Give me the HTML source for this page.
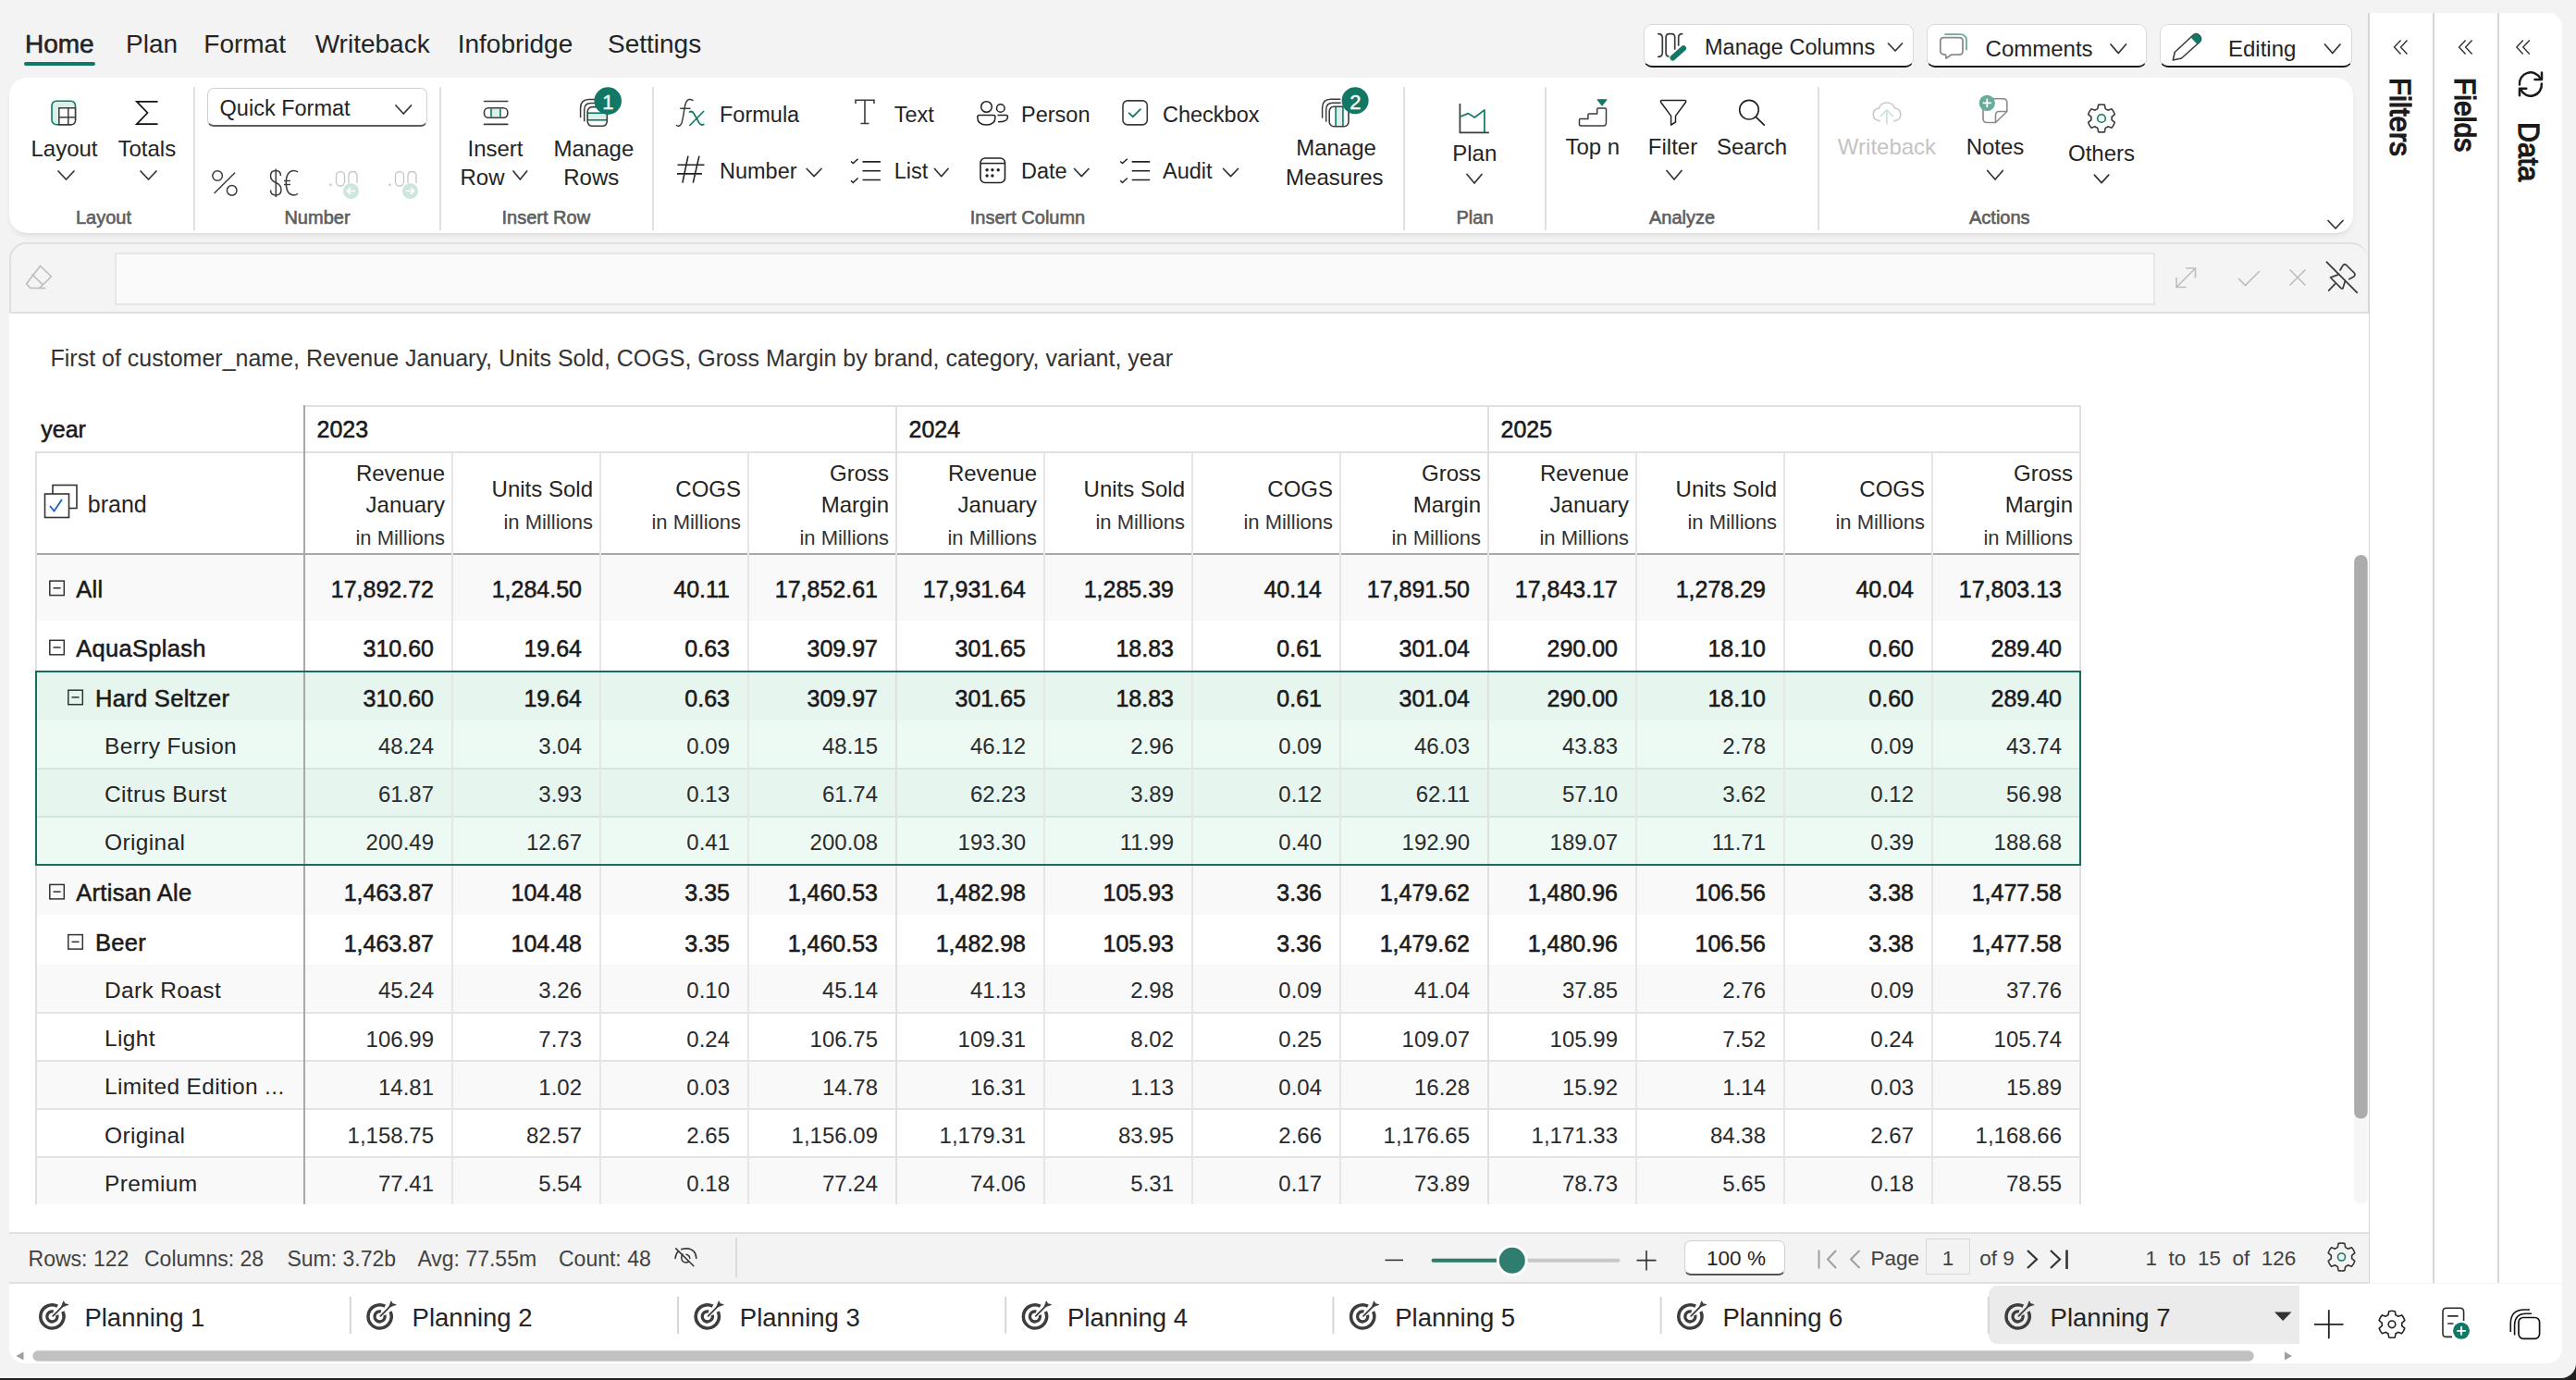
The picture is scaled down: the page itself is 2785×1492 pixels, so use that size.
<!DOCTYPE html><html><head><meta charset="utf-8"><style>
html,body{margin:0;padding:0;}
body{width:2785px;height:1492px;overflow:hidden;background:#202020;position:relative;font-family:"Liberation Sans", sans-serif;}
.t{position:absolute;white-space:nowrap;font-family:"Liberation Sans", sans-serif;}
#page{position:absolute;left:0;top:0;width:2785px;height:1490px;background:#f3f3f3;border-bottom-right-radius:16px;overflow:hidden;}
</style></head><body><div id="page">
<div class="t" style="left:27.0px;top:34.2px;font-size:28px;line-height:28px;font-weight:400;color:#242424;-webkit-text-stroke:0.6px #242424;">Home</div>
<div class="t" style="left:136.0px;top:34.2px;font-size:28px;line-height:28px;font-weight:400;color:#242424;">Plan</div>
<div class="t" style="left:220.3px;top:34.2px;font-size:28px;line-height:28px;font-weight:400;color:#242424;">Format</div>
<div class="t" style="left:340.7px;top:34.2px;font-size:28px;line-height:28px;font-weight:400;color:#242424;">Writeback</div>
<div class="t" style="left:494.7px;top:34.2px;font-size:28px;line-height:28px;font-weight:400;color:#242424;">Infobridge</div>
<div class="t" style="left:657.0px;top:34.2px;font-size:28px;line-height:28px;font-weight:400;color:#242424;">Settings</div>
<div style="position:absolute;left:26.0px;top:67.0px;width:77.0px;height:4.0px;background:#117865;border-radius:2px;"></div>
<div style="position:absolute;left:1777.0px;top:26.0px;width:292.0px;height:46.5px;background:#fff;border:1.5px solid #d9d9d9;border-bottom:2.5px solid #1a1a1a;border-radius:9px;box-sizing:border-box;"></div>
<div style="position:absolute;left:2083.0px;top:26.0px;width:237.6px;height:46.5px;background:#fff;border:1.5px solid #d9d9d9;border-bottom:2.5px solid #1a1a1a;border-radius:9px;box-sizing:border-box;"></div>
<div style="position:absolute;left:2335.0px;top:26.0px;width:207.6px;height:46.5px;background:#fff;border:1.5px solid #d9d9d9;border-bottom:2.5px solid #1a1a1a;border-radius:9px;box-sizing:border-box;"></div>
<div class="t" style="left:1843.0px;top:40.0px;font-size:23.5px;line-height:23.5px;font-weight:400;color:#242424;">Manage Columns</div>
<div class="t" style="left:2146.6px;top:41.2px;font-size:24px;line-height:24px;font-weight:400;color:#242424;">Comments</div>
<div class="t" style="left:2409.0px;top:41.2px;font-size:24px;line-height:24px;font-weight:400;color:#242424;">Editing</div>
<svg style="position:absolute;left:0;top:0" width="2785" height="1492" viewBox="0 0 2785 1492" fill="none"><polyline points="2041.5,47 2049.0,55 2056.5,47" stroke="#333" stroke-width="1.7" fill="none" stroke-linecap="round" stroke-linejoin="round"/><polyline points="2282,48 2290.25,57.5 2298.5,48" stroke="#333" stroke-width="1.7" fill="none" stroke-linecap="round" stroke-linejoin="round"/><polyline points="2513.5,48 2521.75,57.5 2530,48" stroke="#333" stroke-width="1.7" fill="none" stroke-linecap="round" stroke-linejoin="round"/><path d="M1792.8,36.6 Q1797.3,36.6 1797.3,41 L1797.3,57 Q1797.3,61.4 1792.8,61.4" stroke="#3b3b3b" stroke-width="1.7" fill="none" stroke-linecap="round"/><path d="M1803.8,60.9 Q1801.1,60.9 1801.1,57 L1801.1,40.5 Q1801.1,36.6 1804.5,36.6 L1807.5,36.6 Q1810.7,36.6 1810.7,40.5 L1810.7,53" stroke="#3b3b3b" stroke-width="1.7" fill="none" stroke-linecap="round"/><path d="M1818.7,36.6 Q1814.7,36.6 1814.7,40.5 L1814.7,49" stroke="#3b3b3b" stroke-width="1.7" fill="none" stroke-linecap="round"/><line x1="1808.5" y1="62.5" x2="1820" y2="52.3" stroke="#117865" stroke-width="6" stroke-linecap="round"/><path d="M2102.3,37.2 L2119,37.2 Q2126,37.2 2126,44 L2126,54.3" stroke="#6aab9c" stroke-width="1.8" fill="none"/><path d="M2101.8,40.6 L2118.2,40.6 Q2122,40.6 2122,44.5 L2122,55.3 Q2122,59.2 2118.2,59.2 L2109.6,59.2 L2104,63 L2103.5,59.2 Q2097.8,59.2 2097.8,55.3 L2097.8,44.5 Q2097.8,40.6 2101.8,40.6 Z" stroke="#8a8a8a" stroke-width="1.8" fill="#fff" stroke-linejoin="round"/><path d="M2349.3,65 L2351.2,56.5 L2371,38 Q2374.5,35 2378,38.5 Q2381,42 2378,45.5 L2358.5,63 Z" stroke="#3b3b3b" stroke-width="1.6" fill="#fff" stroke-linejoin="round"/><path d="M2368.5,40.5 L2371,38 Q2374.5,35 2378,38.5 Q2381,42 2378,45.5 L2375.5,47.8 Z" fill="#117865"/></svg>
<div style="position:absolute;left:10.0px;top:84.0px;width:2534.0px;height:168.0px;background:#fff;border-radius:19px;box-shadow:0 4px 7px -3px rgba(0,0,0,0.14);"></div>
<div style="position:absolute;left:209.0px;top:94.0px;width:2.0px;height:155.0px;background:#e0e0e0;"></div>
<div style="position:absolute;left:475.0px;top:94.0px;width:2.0px;height:155.0px;background:#e0e0e0;"></div>
<div style="position:absolute;left:704.7px;top:94.0px;width:2.0px;height:155.0px;background:#e0e0e0;"></div>
<div style="position:absolute;left:1516.5px;top:94.0px;width:2.0px;height:155.0px;background:#e0e0e0;"></div>
<div style="position:absolute;left:1670.0px;top:94.0px;width:2.0px;height:155.0px;background:#e0e0e0;"></div>
<div style="position:absolute;left:1964.7px;top:94.0px;width:2.0px;height:155.0px;background:#e0e0e0;"></div>
<div class="t" style="left:69.5px;transform:translateX(-50%);top:148.6px;font-size:24px;line-height:24px;font-weight:400;color:#242424;">Layout</div>
<div class="t" style="left:158.8px;transform:translateX(-50%);top:148.6px;font-size:24px;line-height:24px;font-weight:400;color:#242424;">Totals</div>
<div class="t" style="left:112.0px;transform:translateX(-50%);top:225.0px;font-size:20px;line-height:20px;font-weight:400;color:#616161;font-weight:400;-webkit-text-stroke:0.6px #5a5a5a;">Layout</div>
<div style="position:absolute;left:223.6px;top:94.5px;width:238.1px;height:42.8px;background:#fff;border:1.5px solid #d1d1d1;border-bottom:2px solid #5c5c5c;border-radius:7px;box-sizing:border-box;"></div>
<div class="t" style="left:237.6px;top:106.0px;font-size:23.5px;line-height:23.5px;font-weight:400;color:#242424;">Quick Format</div>
<div class="t" style="left:343.0px;transform:translateX(-50%);top:225.0px;font-size:20px;line-height:20px;font-weight:400;color:#616161;font-weight:400;-webkit-text-stroke:0.6px #5a5a5a;">Number</div>
<div class="t" style="left:535.5px;transform:translateX(-50%);top:148.6px;font-size:24px;line-height:24px;font-weight:400;color:#242424;">Insert</div>
<div class="t" style="left:497.5px;top:179.6px;font-size:24px;line-height:24px;font-weight:400;color:#242424;">Row</div>
<div class="t" style="left:641.9px;transform:translateX(-50%);top:148.6px;font-size:24px;line-height:24px;font-weight:400;color:#242424;">Manage</div>
<div class="t" style="left:639.3px;transform:translateX(-50%);top:179.6px;font-size:24px;line-height:24px;font-weight:400;color:#242424;">Rows</div>
<div class="t" style="left:590.3px;transform:translateX(-50%);top:225.0px;font-size:20px;line-height:20px;font-weight:400;color:#616161;font-weight:400;-webkit-text-stroke:0.6px #5a5a5a;">Insert Row</div>
<div class="t" style="left:778.0px;top:112.5px;font-size:23.5px;line-height:23.5px;font-weight:400;color:#242424;">Formula</div>
<div class="t" style="left:966.8px;top:112.5px;font-size:23.5px;line-height:23.5px;font-weight:400;color:#242424;">Text</div>
<div class="t" style="left:1104.0px;top:112.5px;font-size:23.5px;line-height:23.5px;font-weight:400;color:#242424;">Person</div>
<div class="t" style="left:1257.0px;top:112.5px;font-size:23.5px;line-height:23.5px;font-weight:400;color:#242424;">Checkbox</div>
<div class="t" style="left:778.0px;top:174.0px;font-size:23.5px;line-height:23.5px;font-weight:400;color:#242424;">Number</div>
<div class="t" style="left:966.8px;top:174.0px;font-size:23.5px;line-height:23.5px;font-weight:400;color:#242424;">List</div>
<div class="t" style="left:1104.0px;top:174.0px;font-size:23.5px;line-height:23.5px;font-weight:400;color:#242424;">Date</div>
<div class="t" style="left:1257.0px;top:174.0px;font-size:23.5px;line-height:23.5px;font-weight:400;color:#242424;">Audit</div>
<div class="t" style="left:1444.5px;transform:translateX(-50%);top:148.1px;font-size:24px;line-height:24px;font-weight:400;color:#242424;">Manage</div>
<div class="t" style="left:1442.8px;transform:translateX(-50%);top:179.9px;font-size:24px;line-height:24px;font-weight:400;color:#242424;">Measures</div>
<div class="t" style="left:1111.0px;transform:translateX(-50%);top:225.4px;font-size:20px;line-height:20px;font-weight:400;color:#616161;font-weight:400;-webkit-text-stroke:0.6px #5a5a5a;">Insert Column</div>
<div class="t" style="left:1594.3px;transform:translateX(-50%);top:153.6px;font-size:24px;line-height:24px;font-weight:400;color:#242424;">Plan</div>
<div class="t" style="left:1594.5px;transform:translateX(-50%);top:225.0px;font-size:20px;line-height:20px;font-weight:400;color:#616161;font-weight:400;-webkit-text-stroke:0.6px #5a5a5a;">Plan</div>
<div class="t" style="left:1721.8px;transform:translateX(-50%);top:147.1px;font-size:24px;line-height:24px;font-weight:400;color:#242424;">Top n</div>
<div class="t" style="left:1808.5px;transform:translateX(-50%);top:147.1px;font-size:24px;line-height:24px;font-weight:400;color:#242424;">Filter</div>
<div class="t" style="left:1894.0px;transform:translateX(-50%);top:147.1px;font-size:24px;line-height:24px;font-weight:400;color:#242424;">Search</div>
<div class="t" style="left:1818.5px;transform:translateX(-50%);top:225.0px;font-size:20px;line-height:20px;font-weight:400;color:#616161;font-weight:400;-webkit-text-stroke:0.6px #5a5a5a;">Analyze</div>
<div class="t" style="left:2040.0px;transform:translateX(-50%);top:147.1px;font-size:24px;line-height:24px;font-weight:400;color:#c4c4c4;">Writeback</div>
<div class="t" style="left:2157.0px;transform:translateX(-50%);top:147.1px;font-size:24px;line-height:24px;font-weight:400;color:#242424;">Notes</div>
<div class="t" style="left:2272.0px;transform:translateX(-50%);top:153.6px;font-size:24px;line-height:24px;font-weight:400;color:#242424;">Others</div>
<div class="t" style="left:2161.8px;transform:translateX(-50%);top:225.0px;font-size:20px;line-height:20px;font-weight:400;color:#616161;font-weight:400;-webkit-text-stroke:0.6px #5a5a5a;">Actions</div>
<svg style="position:absolute;left:0;top:0" width="2785" height="1492" viewBox="0 0 2785 1492" fill="none"><polyline points="63,185 71.5,194 80,185" stroke="#333" stroke-width="1.7" fill="none" stroke-linecap="round" stroke-linejoin="round"/><polyline points="152,185 160.5,194 169,185" stroke="#333" stroke-width="1.7" fill="none" stroke-linecap="round" stroke-linejoin="round"/><polyline points="428,114 436.25,123 444.5,114" stroke="#333" stroke-width="1.7" fill="none" stroke-linecap="round" stroke-linejoin="round"/><polyline points="555,185 562.3,194 569.6,185" stroke="#333" stroke-width="1.7" fill="none" stroke-linecap="round" stroke-linejoin="round"/><polyline points="872.2,182.5 880.1,190.7 888,182.5" stroke="#333" stroke-width="1.7" fill="none" stroke-linecap="round" stroke-linejoin="round"/><polyline points="1010.5,182.5 1017.75,190.7 1025,182.5" stroke="#333" stroke-width="1.7" fill="none" stroke-linecap="round" stroke-linejoin="round"/><polyline points="1161.5,182.5 1169.25,190.7 1177,182.5" stroke="#333" stroke-width="1.7" fill="none" stroke-linecap="round" stroke-linejoin="round"/><polyline points="1322.6,182.5 1330.55,190.7 1338.5,182.5" stroke="#333" stroke-width="1.7" fill="none" stroke-linecap="round" stroke-linejoin="round"/><polyline points="1586,188.5 1594.0,198 1602,188.5" stroke="#333" stroke-width="1.7" fill="none" stroke-linecap="round" stroke-linejoin="round"/><polyline points="1802,184.5 1810.0,194 1818,184.5" stroke="#333" stroke-width="1.7" fill="none" stroke-linecap="round" stroke-linejoin="round"/><polyline points="2148.7,184.5 2157.0,194 2165.3,184.5" stroke="#333" stroke-width="1.7" fill="none" stroke-linecap="round" stroke-linejoin="round"/><polyline points="2264.3,189.2 2272.05,197.6 2279.8,189.2" stroke="#333" stroke-width="1.7" fill="none" stroke-linecap="round" stroke-linejoin="round"/><polyline points="2517,238.5 2525.0,247 2533,238.5" stroke="#333" stroke-width="1.7" fill="none" stroke-linecap="round" stroke-linejoin="round"/><rect x="56" y="109.2" width="25.5" height="25.5" rx="5" stroke="#117865" stroke-width="1.6" fill="#dcf0ea"/><path d="M63.8,134.7 L63.8,116.8 L81.5,116.8 L81.5,130 Q81.5,134.7 76.8,134.7 Z" stroke="#3b3b3b" stroke-width="1.5" fill="#fff"/><line x1="73.8" y1="116.8" x2="73.8" y2="134.7" stroke="#3b3b3b" stroke-width="1.5"/><line x1="63.8" y1="126.8" x2="81.5" y2="126.8" stroke="#3b3b3b" stroke-width="1.5"/><polyline points="170.5,109.8 147.8,109.8 159.5,122 147.8,134.2 170.5,134.2" stroke="#111" stroke-width="1.7" fill="none" stroke-linejoin="miter"/><circle cx="235.1" cy="190" r="5.3" stroke="#3b3b3b" stroke-width="1.5"/><circle cx="250.7" cy="205.9" r="5.3" stroke="#3b3b3b" stroke-width="1.5"/><line x1="231.6" y1="209" x2="254" y2="186.8" stroke="#3b3b3b" stroke-width="1.5"/><path d="M303.5,190 Q303.5,184.5 298.3,184.5 Q292.5,184.5 292.5,190 Q292.5,195 298.3,197.5 Q304,200 304,205 Q304,211 298.3,211 Q292.5,211 292.5,205.5" stroke="#3b3b3b" stroke-width="1.5" fill="none"/><line x1="298.3" y1="182.5" x2="298.3" y2="213" stroke="#3b3b3b" stroke-width="1.5"/><path d="M322,186 Q319.5,184.3 317,184.5 Q309.3,185.5 309.3,197.7 Q309.3,210 317,211 Q319.5,211.2 322,209.5" stroke="#3b3b3b" stroke-width="1.5" fill="none"/><line x1="307" y1="195.5" x2="314" y2="195.5" stroke="#3b3b3b" stroke-width="1.4"/><line x1="307" y1="199.5" x2="314" y2="199.5" stroke="#3b3b3b" stroke-width="1.4"/><circle cx="357.4" cy="199.8" r="1.3" fill="#c8c8c8"/><rect x="363.5" y="185.5" width="9" height="15.5" rx="4.5" stroke="#c8c8c8" stroke-width="1.4"/><path d="M377,198 L377,190 Q377,185.5 381.5,185.5 Q386,185.5 386,190 L386,198" stroke="#c8c8c8" stroke-width="1.4" fill="none"/><circle cx="379.5" cy="206.5" r="8.6" fill="#cfe6e0"/><path d="M384.0,206.5 L375.5,206.5 M379.0,203 L375.5,206.5 L379.0,210" stroke="#fff" stroke-width="1.6" fill="none"/><circle cx="421.4" cy="199.8" r="1.3" fill="#c8c8c8"/><rect x="427.5" y="185.5" width="9" height="15.5" rx="4.5" stroke="#c8c8c8" stroke-width="1.4"/><path d="M441,198 L441,190 Q441,185.5 445.5,185.5 Q450,185.5 450,190 L450,198" stroke="#c8c8c8" stroke-width="1.4" fill="none"/><circle cx="443.5" cy="206.5" r="8.6" fill="#cfe6e0"/><path d="M439.0,206.5 L447.5,206.5 M444.0,203 L447.5,206.5 L444.0,210" stroke="#fff" stroke-width="1.6" fill="none"/><line x1="523.5" y1="109.5" x2="548.8" y2="109.5" stroke="#3b3b3b" stroke-width="1.6" stroke-linecap="round"/><line x1="523.5" y1="134.4" x2="548.8" y2="134.4" stroke="#3b3b3b" stroke-width="1.6" stroke-linecap="round"/><rect x="531" y="117.5" width="10" height="9" fill="#dcf0ea"/><line x1="531" y1="117.5" x2="531" y2="126.5" stroke="#117865" stroke-width="1.6"/><line x1="540.9" y1="117.5" x2="540.9" y2="126.5" stroke="#117865" stroke-width="1.6"/><rect x="523.5" y="116.8" width="25.3" height="10.4" rx="4.5" stroke="#3b3b3b" stroke-width="1.6"/><path d="M627.6,127.30000000000001 L627.6,117.1 Q627.6,107.6 636.7,107.6 L647.2,107.6" stroke="#3b3b3b" stroke-width="1.5" fill="none"/><path d="M631.7,131.3 L631.7,119.1 Q631.7,111.6 638.7,111.6 L647.7,111.6" stroke="#3b3b3b" stroke-width="1.5" fill="none"/><rect x="635.2" y="122.19999999999999" width="21.09999999999991" height="7.6" fill="#dcf0ea"/><line x1="635.2" y1="122.19999999999999" x2="656.3" y2="122.19999999999999" stroke="#117865" stroke-width="1.6"/><line x1="635.2" y1="129.79999999999998" x2="656.3" y2="129.79999999999998" stroke="#117865" stroke-width="1.6"/><rect x="635.2" y="115.6" width="21.09999999999991" height="20.700000000000017" rx="5" stroke="#3b3b3b" stroke-width="1.6"/><path d="M1429.6000000000001,127.69999999999999 L1429.6000000000001,116.7 Q1429.6000000000001,107.2 1438.7,107.2 L1449.2,107.2" stroke="#3b3b3b" stroke-width="1.5" fill="none"/><path d="M1433.7,131.7 L1433.7,118.7 Q1433.7,111.2 1440.7,111.2 L1449.7,111.2" stroke="#3b3b3b" stroke-width="1.5" fill="none"/><rect x="1444.1000000000001" y="115.2" width="7.8" height="21.499999999999986" fill="#dcf0ea"/><line x1="1444.1000000000001" y1="115.2" x2="1444.1000000000001" y2="136.7" stroke="#117865" stroke-width="1.6"/><line x1="1451.9" y1="115.2" x2="1451.9" y2="136.7" stroke="#117865" stroke-width="1.6"/><rect x="1437.2" y="115.2" width="20.799999999999955" height="21.499999999999986" rx="5" stroke="#3b3b3b" stroke-width="1.6"/><circle cx="657.2" cy="109.1" r="14.8" fill="#117865"/><circle cx="1465.1" cy="108.7" r="14.5" fill="#117865"/></svg>
<div class="t" style="left:657.4px;transform:translateX(-50%);top:100.1px;font-size:22px;line-height:22px;font-weight:400;color:#fff;-webkit-text-stroke:0.4px #fff;">1</div>
<div class="t" style="left:1465.3px;transform:translateX(-50%);top:99.8px;font-size:22px;line-height:22px;font-weight:400;color:#fff;-webkit-text-stroke:0.4px #fff;">2</div>
<svg style="position:absolute;left:0;top:0" width="2785" height="1492" viewBox="0 0 2785 1492" fill="none"><path d="M731.5,135.6 Q735,137.8 737,133 Q738.5,128 740,117 Q741.5,108 745,107.5 Q747.5,107.3 749,108.5" stroke="#3b3b3b" stroke-width="1.5" fill="none" stroke-linecap="round"/><line x1="735.2" y1="117.3" x2="746.6" y2="117.3" stroke="#3b3b3b" stroke-width="1.5"/><path d="M745.5,121 Q748,119.5 750,122.5 L756,133 Q758,136 760.8,134.5" stroke="#117865" stroke-width="1.7" fill="none" stroke-linecap="round"/><line x1="745.8" y1="135.5" x2="760.6" y2="120.5" stroke="#117865" stroke-width="1.7" stroke-linecap="round"/><path d="M925,112 L925,108.3 L945,108.3 L945,112 M935,108.3 L935,133.5 M930.5,133.5 L939.5,133.5" stroke="#3b3b3b" stroke-width="1.6" fill="none"/><circle cx="1066.5" cy="115.5" r="5.8" stroke="#222" stroke-width="1.5"/><circle cx="1081.8" cy="117" r="4.3" stroke="#222" stroke-width="1.5"/><path d="M1059,124.5 L1074,124.5 Q1076,124.5 1076,126.5 Q1076,135 1066.4,135 Q1056.8,135 1056.8,126.5 Q1056.8,124.5 1059,124.5 Z" stroke="#222" stroke-width="1.5" fill="none"/><path d="M1078.5,124.5 L1087.5,124.5 Q1089.5,124.5 1089.5,126.5 Q1089.5,131.8 1079,131.8" stroke="#222" stroke-width="1.5" fill="none"/><rect x="1214" y="108.9" width="26.3" height="26" rx="5" stroke="#3b3b3b" stroke-width="1.6"/><polyline points="1220.2,121.9 1224.9,126.2 1233.4,117.6" stroke="#117865" stroke-width="1.8" fill="none"/><path d="M732.5,178.2 L761.5,178.2 M732,187.9 L759,187.9 M743.9,168.6 L737.9,197.6 M755.9,168.6 L749.3,197.6" stroke="#222" stroke-width="1.6" fill="none"/><polyline points="920,174.5 922.3,176.5 927.6,171.8" stroke="#222" stroke-width="1.5" fill="none"/><polyline points="920,195.3 922.3,197.5 927.6,192.5" stroke="#222" stroke-width="1.5" fill="none"/><path d="M932.5,174.9 L952,174.9 M932.5,184.7 L952,184.7 M932.5,194.5 L952,194.5" stroke="#222" stroke-width="1.6"/><polyline points="1211.2,174.5 1213.5,176.5 1218.8,171.8" stroke="#222" stroke-width="1.5" fill="none"/><polyline points="1211.2,195.3 1213.5,197.5 1218.8,192.5" stroke="#222" stroke-width="1.5" fill="none"/><path d="M1223.7,174.9 L1243.2,174.9 M1223.7,184.7 L1243.2,184.7 M1223.7,194.5 L1243.2,194.5" stroke="#222" stroke-width="1.6"/><rect x="1060" y="171" width="26.5" height="26.5" rx="5" stroke="#222" stroke-width="1.6"/><line x1="1060" y1="176.6" x2="1086.5" y2="176.6" stroke="#222" stroke-width="1.5"/><circle cx="1067.1" cy="183.8" r="1.7" fill="#222"/><circle cx="1072.9" cy="183.8" r="1.7" fill="#222"/><circle cx="1079.2" cy="183.8" r="1.7" fill="#222"/><circle cx="1067.1" cy="190" r="1.7" fill="#222"/><circle cx="1072.9" cy="190" r="1.7" fill="#222"/><polyline points="1578.4,112 1578.4,143.4 1609.8,143.4" stroke="#3b3b3b" stroke-width="1.7" fill="none"/><polyline points="1578.4,126.3 1587.4,122.6 1594.3,127 1604.9,118.9 1604.9,143" stroke="#117865" stroke-width="1.7" fill="none" stroke-linejoin="round"/><path d="M1709.5,136 L1734,136 Q1736.5,136 1736.5,132 L1736.5,118 Q1736.5,116.9 1735.4,116.9 L1727.7,116.9 Q1726.7,116.9 1726.7,118 L1726.7,123.1 L1718,123.1 Q1716.9,123.1 1716.9,124.2 L1716.9,128.5 L1708.6,128.5 Q1707.5,128.5 1707.5,129.6 L1707.5,134.5 Q1707.5,136 1709.5,136 Z" stroke="#3b3b3b" stroke-width="1.5" fill="none" stroke-linejoin="round"/><path d="M1727.3,107.8 L1736.8,107.8 L1732,113.8 Z" fill="#117865" stroke="#117865" stroke-width="1.2" stroke-linejoin="round"/><path d="M1796.5,108.4 L1821.7,108.4 Q1823.5,108.9 1822.3,110.8 L1811.5,125.4 L1811.5,132 L1806.6,135.2 L1806.6,125.4 L1795.8,110.8 Q1794.7,108.9 1796.5,108.4 Z" stroke="#222" stroke-width="1.5" fill="none" stroke-linejoin="round"/><circle cx="1891" cy="118.7" r="10.3" stroke="#222" stroke-width="1.6"/><line x1="1898.8" y1="126.9" x2="1907.3" y2="135.2" stroke="#222" stroke-width="1.7" stroke-linecap="round"/><path d="M2033,130.8 Q2025,130.5 2025.2,123.5 Q2025.5,117.5 2031.5,117 Q2033.5,111 2040,111 Q2046.5,111 2048.5,117 Q2054.8,117.5 2054.8,124 Q2054.5,130.5 2047,130.8" stroke="#c8c8c8" stroke-width="1.5" fill="none"/><path d="M2039.9,134.3 L2039.9,118.8 M2032.7,126.3 L2039.9,118.8 L2047,126.3" stroke="#c5e3dc" stroke-width="1.6" fill="none"/><path d="M2148.5,106.8 L2165.5,106.8 Q2169.8,106.8 2169.8,111 L2169.8,120.5 L2157.5,132.5 L2148.3,132.5 Q2144,132.5 2144,128.2 L2144,113" stroke="#8a8a8a" stroke-width="1.6" fill="none"/><path d="M2169.8,120.5 L2161.5,120.5 Q2157.5,120.5 2157.5,124.5 L2157.5,132.5" stroke="#8a8a8a" stroke-width="1.6" fill="none"/><circle cx="2148.3" cy="111.4" r="8.6" fill="#6aab9c"/><path d="M2148.3,106.8 L2148.3,116 M2143.7,111.4 L2152.9,111.4" stroke="#fff" stroke-width="1.8"/><path d="M2267.80,117.62 L2268.63,113.38 A15,15 0 0 1 2275.37,113.38 L2276.20,117.62 A11.2,11.2 0 0 1 2278.90,119.17 L2282.97,117.77 A15,15 0 0 1 2286.34,123.61 L2283.09,126.44 A11.2,11.2 0 0 1 2283.09,129.56 L2286.34,132.39 A15,15 0 0 1 2282.97,138.23 L2278.90,136.83 A11.2,11.2 0 0 1 2276.20,138.38 L2275.37,142.62 A15,15 0 0 1 2268.63,142.62 L2267.80,138.38 A11.2,11.2 0 0 1 2265.10,136.83 L2261.03,138.23 A15,15 0 0 1 2257.66,132.39 L2260.91,129.56 A11.2,11.2 0 0 1 2260.91,126.44 L2257.66,123.61 A15,15 0 0 1 2261.03,117.77 L2265.10,119.17 A11.2,11.2 0 0 1 2267.80,117.62 Z" stroke="#3b3b3b" stroke-width="1.6" stroke-linejoin="round" fill="none"/><circle cx="2272" cy="128" r="4.3" stroke="#117865" stroke-width="1.6"/></svg>
<div style="position:absolute;left:10.0px;top:262.0px;width:2550.0px;height:77.0px;background:#f4f4f4;border:2px solid #e0e0e0;border-right:none;border-top-left-radius:18px;border-top-right-radius:18px;box-sizing:border-box;"></div>
<div style="position:absolute;left:124.0px;top:272.5px;width:2205.5px;height:57.0px;background:#fafafa;border:2px solid #e6e6e6;box-sizing:border-box;"></div>
<svg style="position:absolute;left:0;top:0" width="2785" height="1492" viewBox="0 0 2785 1492" fill="none"><path d="M43.5,287.5 L55.5,299 L42.5,311.5 L33,311.5 L28.5,307 Z M34.5,296.5 L46.5,308" stroke="#bcbcbc" stroke-width="1.6" fill="none" stroke-linejoin="round"/><line x1="42.5" y1="311.5" x2="49" y2="311.5" stroke="#bcbcbc" stroke-width="1.6"/><path d="M2353,310.5 L2373.5,290 M2363,290 L2373.5,290 L2373.5,300.5 M2353,300 L2353,310.5 L2363.5,310.5" stroke="#bdbdbd" stroke-width="1.6" fill="none"/><polyline points="2420,301 2427.5,308.5 2443,293" stroke="#bdbdbd" stroke-width="1.7" fill="none"/><path d="M2475.5,291.5 L2492.5,308.5 M2492.5,291.5 L2475.5,308.5" stroke="#bdbdbd" stroke-width="1.6"/><path d="M2530,292 L2533,287 Q2534.8,285 2536.6,286.5 L2545.2,295 Q2547,297.6 2544.5,299.3 L2539.8,301.8" stroke="#3a3a3a" stroke-width="1.7" fill="none" stroke-linecap="round" stroke-linejoin="round"/><path d="M2527.5,297.1 L2519.5,300 L2531,311.6 Q2532.6,313 2533.2,311 L2535.3,304" stroke="#3a3a3a" stroke-width="1.7" fill="none" stroke-linecap="round" stroke-linejoin="round"/><line x1="2524.6" y1="306.9" x2="2517.7" y2="314.1" stroke="#3a3a3a" stroke-width="1.7" stroke-linecap="round"/><line x1="2515.5" y1="283.3" x2="2548.3" y2="316.3" stroke="#3a3a3a" stroke-width="1.8" stroke-linecap="round"/></svg>
<div style="position:absolute;left:2561.0px;top:14.0px;width:209.0px;height:1373.0px;background:#fff;border-top-right-radius:15px;"></div>
<div style="position:absolute;left:2560.0px;top:14.0px;width:2.0px;height:1373.0px;background:#d6d6d6;"></div>
<div style="position:absolute;left:2630.0px;top:14.0px;width:2.0px;height:1373.0px;background:#d6d6d6;"></div>
<div style="position:absolute;left:2700.0px;top:14.0px;width:2.0px;height:1373.0px;background:#d6d6d6;"></div>
<svg style="position:absolute;left:0;top:0" width="2785" height="1492" viewBox="0 0 2785 1492" fill="none"><polyline points="2595.5,43.5 2588.5,51 2595.5,58.5" stroke="#333" stroke-width="1.4" fill="none"/><polyline points="2602.5,43.5 2595.5,51 2602.5,58.5" stroke="#333" stroke-width="1.4" fill="none"/><polyline points="2665.6,43.5 2658.6,51 2665.6,58.5" stroke="#333" stroke-width="1.4" fill="none"/><polyline points="2672.6,43.5 2665.6,51 2672.6,58.5" stroke="#333" stroke-width="1.4" fill="none"/><polyline points="2727.8,43.5 2720.8,51 2727.8,58.5" stroke="#333" stroke-width="1.4" fill="none"/><polyline points="2734.8,43.5 2727.8,51 2734.8,58.5" stroke="#333" stroke-width="1.4" fill="none"/></svg>
<div style="position:absolute;left:10.0px;top:339.0px;width:2551.0px;height:994.0px;background:#fff;"></div>
<div class="t" style="left:54.5px;top:374.8px;font-size:25px;line-height:25px;font-weight:400;color:#333333;">First of customer_name, Revenue January, Units Sold, COGS, Gross Margin by brand, category, variant, year</div>
<div style="position:absolute;left:38.6px;top:599.0px;width:2210.4px;height:72.4px;background:#f9f9f9;"></div>
<div style="position:absolute;left:38.6px;top:671.4px;width:2210.4px;height:54.6px;background:#ffffff;"></div>
<div style="position:absolute;left:38.6px;top:726.0px;width:2210.4px;height:53.0px;background:#e6f5ee;"></div>
<div style="position:absolute;left:38.6px;top:779.0px;width:2210.4px;height:51.5px;background:#edfaf4;"></div>
<div style="position:absolute;left:38.6px;top:830.5px;width:2210.4px;height:52.1px;background:#e6f5ee;"></div>
<div style="position:absolute;left:38.6px;top:882.6px;width:2210.4px;height:52.2px;background:#edfaf4;"></div>
<div style="position:absolute;left:38.6px;top:934.8px;width:2210.4px;height:54.7px;background:#f9f9f9;"></div>
<div style="position:absolute;left:38.6px;top:989.5px;width:2210.4px;height:53.5px;background:#ffffff;"></div>
<div style="position:absolute;left:38.6px;top:1043.0px;width:2210.4px;height:51.7px;background:#f9f9f9;"></div>
<div style="position:absolute;left:38.6px;top:1094.7px;width:2210.4px;height:52.2px;background:#ffffff;"></div>
<div style="position:absolute;left:38.6px;top:1146.9px;width:2210.4px;height:51.9px;background:#f9f9f9;"></div>
<div style="position:absolute;left:38.6px;top:1198.8px;width:2210.4px;height:52.2px;background:#ffffff;"></div>
<div style="position:absolute;left:38.6px;top:1251.0px;width:2210.4px;height:51.0px;background:#f9f9f9;"></div>
<div style="position:absolute;left:38.6px;top:829.5px;width:2210.4px;height:2.0px;background:#d3e6dd;"></div>
<div style="position:absolute;left:38.6px;top:881.6px;width:2210.4px;height:2.0px;background:#d3e6dd;"></div>
<div style="position:absolute;left:38.6px;top:1093.7px;width:2210.4px;height:2.0px;background:#e3e3e3;"></div>
<div style="position:absolute;left:38.6px;top:1145.9px;width:2210.4px;height:2.0px;background:#e3e3e3;"></div>
<div style="position:absolute;left:38.6px;top:1197.8px;width:2210.4px;height:2.0px;background:#e3e3e3;"></div>
<div style="position:absolute;left:38.6px;top:1250.0px;width:2210.4px;height:2.0px;background:#e3e3e3;"></div>
<div style="position:absolute;left:329.0px;top:438.0px;width:1920.0px;height:2.0px;background:#e0e0e0;"></div>
<div style="position:absolute;left:38.6px;top:488.0px;width:2210.4px;height:2.0px;background:#e0e0e0;"></div>
<div style="position:absolute;left:38.6px;top:597.5px;width:2210.4px;height:2.5px;background:#a8a8a8;"></div>
<div style="position:absolute;left:37.6px;top:488.0px;width:2.0px;height:814.0px;background:#e0e0e0;"></div>
<div style="position:absolute;left:328.0px;top:438.0px;width:2.0px;height:864.0px;background:#a8a8a8;"></div>
<div style="position:absolute;left:488.0px;top:489.0px;width:2.0px;height:813.0px;background:#e6e6e6;"></div>
<div style="position:absolute;left:648.0px;top:489.0px;width:2.0px;height:813.0px;background:#e6e6e6;"></div>
<div style="position:absolute;left:808.0px;top:489.0px;width:2.0px;height:813.0px;background:#e6e6e6;"></div>
<div style="position:absolute;left:968.0px;top:438.0px;width:2.0px;height:864.0px;background:#e0e0e0;"></div>
<div style="position:absolute;left:1128.0px;top:489.0px;width:2.0px;height:813.0px;background:#e6e6e6;"></div>
<div style="position:absolute;left:1288.0px;top:489.0px;width:2.0px;height:813.0px;background:#e6e6e6;"></div>
<div style="position:absolute;left:1448.0px;top:489.0px;width:2.0px;height:813.0px;background:#e6e6e6;"></div>
<div style="position:absolute;left:1608.0px;top:438.0px;width:2.0px;height:864.0px;background:#e0e0e0;"></div>
<div style="position:absolute;left:1768.0px;top:489.0px;width:2.0px;height:813.0px;background:#e6e6e6;"></div>
<div style="position:absolute;left:1928.0px;top:489.0px;width:2.0px;height:813.0px;background:#e6e6e6;"></div>
<div style="position:absolute;left:2088.0px;top:489.0px;width:2.0px;height:813.0px;background:#e6e6e6;"></div>
<div style="position:absolute;left:2248.0px;top:438.0px;width:2.0px;height:864.0px;background:#e0e0e0;"></div>
<div style="position:absolute;left:37.6px;top:725.0px;width:2212.4px;height:211.0px;border:2.5px solid #166d5e;box-sizing:border-box;"></div>
<div class="t" style="left:44.3px;top:451.8px;font-size:25px;line-height:25px;font-weight:400;color:#1a1a1a;font-weight:400;-webkit-text-stroke:0.55px currentColor;">year</div>
<div class="t" style="left:342.5px;top:451.8px;font-size:25px;line-height:25px;font-weight:400;color:#1a1a1a;font-weight:400;-webkit-text-stroke:0.55px currentColor;">2023</div>
<div class="t" style="left:982.5px;top:451.8px;font-size:25px;line-height:25px;font-weight:400;color:#1a1a1a;font-weight:400;-webkit-text-stroke:0.55px currentColor;">2024</div>
<div class="t" style="left:1622.5px;top:451.8px;font-size:25px;line-height:25px;font-weight:400;color:#1a1a1a;font-weight:400;-webkit-text-stroke:0.55px currentColor;">2025</div>
<div class="t" style="left:94.8px;top:532.8px;font-size:25px;line-height:25px;font-weight:400;color:#242424;">brand</div>
<svg style="position:absolute;left:0;top:0" width="2785" height="1492" viewBox="0 0 2785 1492" fill="none"><rect x="57" y="524.5" width="26" height="25" stroke="#333" stroke-width="1.6" fill="#fff"/><rect x="48.5" y="534" width="26" height="25.5" stroke="#333" stroke-width="1.6" fill="#fff"/><polyline points="54,547 58.5,552.5 67,540" stroke="#1f5fc4" stroke-width="1.8" fill="none"/></svg>
<div class="t" style="right:2304.0px;top:499.6px;font-size:24px;line-height:24px;font-weight:400;color:#242424;">Revenue</div>
<div class="t" style="right:2304.0px;top:533.6px;font-size:24px;line-height:24px;font-weight:400;color:#242424;">January</div>
<div class="t" style="right:2304.0px;top:571.0px;font-size:22px;line-height:22px;font-weight:400;color:#333;">in Millions</div>
<div class="t" style="right:2144.0px;top:517.3px;font-size:24px;line-height:24px;font-weight:400;color:#242424;">Units Sold</div>
<div class="t" style="right:2144.0px;top:554.0px;font-size:22px;line-height:22px;font-weight:400;color:#333;">in Millions</div>
<div class="t" style="right:1984.0px;top:517.3px;font-size:24px;line-height:24px;font-weight:400;color:#242424;">COGS</div>
<div class="t" style="right:1984.0px;top:554.0px;font-size:22px;line-height:22px;font-weight:400;color:#333;">in Millions</div>
<div class="t" style="right:1824.0px;top:499.6px;font-size:24px;line-height:24px;font-weight:400;color:#242424;">Gross</div>
<div class="t" style="right:1824.0px;top:533.6px;font-size:24px;line-height:24px;font-weight:400;color:#242424;">Margin</div>
<div class="t" style="right:1824.0px;top:571.0px;font-size:22px;line-height:22px;font-weight:400;color:#333;">in Millions</div>
<div class="t" style="right:1664.0px;top:499.6px;font-size:24px;line-height:24px;font-weight:400;color:#242424;">Revenue</div>
<div class="t" style="right:1664.0px;top:533.6px;font-size:24px;line-height:24px;font-weight:400;color:#242424;">January</div>
<div class="t" style="right:1664.0px;top:571.0px;font-size:22px;line-height:22px;font-weight:400;color:#333;">in Millions</div>
<div class="t" style="right:1504.0px;top:517.3px;font-size:24px;line-height:24px;font-weight:400;color:#242424;">Units Sold</div>
<div class="t" style="right:1504.0px;top:554.0px;font-size:22px;line-height:22px;font-weight:400;color:#333;">in Millions</div>
<div class="t" style="right:1344.0px;top:517.3px;font-size:24px;line-height:24px;font-weight:400;color:#242424;">COGS</div>
<div class="t" style="right:1344.0px;top:554.0px;font-size:22px;line-height:22px;font-weight:400;color:#333;">in Millions</div>
<div class="t" style="right:1184.0px;top:499.6px;font-size:24px;line-height:24px;font-weight:400;color:#242424;">Gross</div>
<div class="t" style="right:1184.0px;top:533.6px;font-size:24px;line-height:24px;font-weight:400;color:#242424;">Margin</div>
<div class="t" style="right:1184.0px;top:571.0px;font-size:22px;line-height:22px;font-weight:400;color:#333;">in Millions</div>
<div class="t" style="right:1024.0px;top:499.6px;font-size:24px;line-height:24px;font-weight:400;color:#242424;">Revenue</div>
<div class="t" style="right:1024.0px;top:533.6px;font-size:24px;line-height:24px;font-weight:400;color:#242424;">January</div>
<div class="t" style="right:1024.0px;top:571.0px;font-size:22px;line-height:22px;font-weight:400;color:#333;">in Millions</div>
<div class="t" style="right:864.0px;top:517.3px;font-size:24px;line-height:24px;font-weight:400;color:#242424;">Units Sold</div>
<div class="t" style="right:864.0px;top:554.0px;font-size:22px;line-height:22px;font-weight:400;color:#333;">in Millions</div>
<div class="t" style="right:704.0px;top:517.3px;font-size:24px;line-height:24px;font-weight:400;color:#242424;">COGS</div>
<div class="t" style="right:704.0px;top:554.0px;font-size:22px;line-height:22px;font-weight:400;color:#333;">in Millions</div>
<div class="t" style="right:544.0px;top:499.6px;font-size:24px;line-height:24px;font-weight:400;color:#242424;">Gross</div>
<div class="t" style="right:544.0px;top:533.6px;font-size:24px;line-height:24px;font-weight:400;color:#242424;">Margin</div>
<div class="t" style="right:544.0px;top:571.0px;font-size:22px;line-height:22px;font-weight:400;color:#333;">in Millions</div>
<div class="t" style="left:82.2px;top:624.6px;font-size:25.5px;line-height:25.5px;font-weight:400;color:#1a1a1a;font-weight:400;-webkit-text-stroke:0.55px currentColor;letter-spacing:0.3px;">All</div>
<div class="t" style="right:2316.0px;top:625.0px;font-size:25px;line-height:25px;font-weight:400;color:#1a1a1a;font-weight:400;-webkit-text-stroke:0.55px currentColor;">17,892.72</div>
<div class="t" style="right:2156.0px;top:625.0px;font-size:25px;line-height:25px;font-weight:400;color:#1a1a1a;font-weight:400;-webkit-text-stroke:0.55px currentColor;">1,284.50</div>
<div class="t" style="right:1996.0px;top:625.0px;font-size:25px;line-height:25px;font-weight:400;color:#1a1a1a;font-weight:400;-webkit-text-stroke:0.55px currentColor;">40.11</div>
<div class="t" style="right:1836.0px;top:625.0px;font-size:25px;line-height:25px;font-weight:400;color:#1a1a1a;font-weight:400;-webkit-text-stroke:0.55px currentColor;">17,852.61</div>
<div class="t" style="right:1676.0px;top:625.0px;font-size:25px;line-height:25px;font-weight:400;color:#1a1a1a;font-weight:400;-webkit-text-stroke:0.55px currentColor;">17,931.64</div>
<div class="t" style="right:1516.0px;top:625.0px;font-size:25px;line-height:25px;font-weight:400;color:#1a1a1a;font-weight:400;-webkit-text-stroke:0.55px currentColor;">1,285.39</div>
<div class="t" style="right:1356.0px;top:625.0px;font-size:25px;line-height:25px;font-weight:400;color:#1a1a1a;font-weight:400;-webkit-text-stroke:0.55px currentColor;">40.14</div>
<div class="t" style="right:1196.0px;top:625.0px;font-size:25px;line-height:25px;font-weight:400;color:#1a1a1a;font-weight:400;-webkit-text-stroke:0.55px currentColor;">17,891.50</div>
<div class="t" style="right:1036.0px;top:625.0px;font-size:25px;line-height:25px;font-weight:400;color:#1a1a1a;font-weight:400;-webkit-text-stroke:0.55px currentColor;">17,843.17</div>
<div class="t" style="right:876.0px;top:625.0px;font-size:25px;line-height:25px;font-weight:400;color:#1a1a1a;font-weight:400;-webkit-text-stroke:0.55px currentColor;">1,278.29</div>
<div class="t" style="right:716.0px;top:625.0px;font-size:25px;line-height:25px;font-weight:400;color:#1a1a1a;font-weight:400;-webkit-text-stroke:0.55px currentColor;">40.04</div>
<div class="t" style="right:556.0px;top:625.0px;font-size:25px;line-height:25px;font-weight:400;color:#1a1a1a;font-weight:400;-webkit-text-stroke:0.55px currentColor;">17,803.13</div>
<div class="t" style="left:82.2px;top:688.8px;font-size:25.5px;line-height:25.5px;font-weight:400;color:#1a1a1a;font-weight:400;-webkit-text-stroke:0.55px currentColor;letter-spacing:0.3px;">AquaSplash</div>
<div class="t" style="right:2316.0px;top:689.2px;font-size:25px;line-height:25px;font-weight:400;color:#1a1a1a;font-weight:400;-webkit-text-stroke:0.55px currentColor;">310.60</div>
<div class="t" style="right:2156.0px;top:689.2px;font-size:25px;line-height:25px;font-weight:400;color:#1a1a1a;font-weight:400;-webkit-text-stroke:0.55px currentColor;">19.64</div>
<div class="t" style="right:1996.0px;top:689.2px;font-size:25px;line-height:25px;font-weight:400;color:#1a1a1a;font-weight:400;-webkit-text-stroke:0.55px currentColor;">0.63</div>
<div class="t" style="right:1836.0px;top:689.2px;font-size:25px;line-height:25px;font-weight:400;color:#1a1a1a;font-weight:400;-webkit-text-stroke:0.55px currentColor;">309.97</div>
<div class="t" style="right:1676.0px;top:689.2px;font-size:25px;line-height:25px;font-weight:400;color:#1a1a1a;font-weight:400;-webkit-text-stroke:0.55px currentColor;">301.65</div>
<div class="t" style="right:1516.0px;top:689.2px;font-size:25px;line-height:25px;font-weight:400;color:#1a1a1a;font-weight:400;-webkit-text-stroke:0.55px currentColor;">18.83</div>
<div class="t" style="right:1356.0px;top:689.2px;font-size:25px;line-height:25px;font-weight:400;color:#1a1a1a;font-weight:400;-webkit-text-stroke:0.55px currentColor;">0.61</div>
<div class="t" style="right:1196.0px;top:689.2px;font-size:25px;line-height:25px;font-weight:400;color:#1a1a1a;font-weight:400;-webkit-text-stroke:0.55px currentColor;">301.04</div>
<div class="t" style="right:1036.0px;top:689.2px;font-size:25px;line-height:25px;font-weight:400;color:#1a1a1a;font-weight:400;-webkit-text-stroke:0.55px currentColor;">290.00</div>
<div class="t" style="right:876.0px;top:689.2px;font-size:25px;line-height:25px;font-weight:400;color:#1a1a1a;font-weight:400;-webkit-text-stroke:0.55px currentColor;">18.10</div>
<div class="t" style="right:716.0px;top:689.2px;font-size:25px;line-height:25px;font-weight:400;color:#1a1a1a;font-weight:400;-webkit-text-stroke:0.55px currentColor;">0.60</div>
<div class="t" style="right:556.0px;top:689.2px;font-size:25px;line-height:25px;font-weight:400;color:#1a1a1a;font-weight:400;-webkit-text-stroke:0.55px currentColor;">289.40</div>
<div class="t" style="left:103.0px;top:742.7px;font-size:25.5px;line-height:25.5px;font-weight:400;color:#1a1a1a;font-weight:400;-webkit-text-stroke:0.55px currentColor;letter-spacing:0.3px;">Hard Seltzer</div>
<div class="t" style="right:2316.0px;top:743.1px;font-size:25px;line-height:25px;font-weight:400;color:#1a1a1a;font-weight:400;-webkit-text-stroke:0.55px currentColor;">310.60</div>
<div class="t" style="right:2156.0px;top:743.1px;font-size:25px;line-height:25px;font-weight:400;color:#1a1a1a;font-weight:400;-webkit-text-stroke:0.55px currentColor;">19.64</div>
<div class="t" style="right:1996.0px;top:743.1px;font-size:25px;line-height:25px;font-weight:400;color:#1a1a1a;font-weight:400;-webkit-text-stroke:0.55px currentColor;">0.63</div>
<div class="t" style="right:1836.0px;top:743.1px;font-size:25px;line-height:25px;font-weight:400;color:#1a1a1a;font-weight:400;-webkit-text-stroke:0.55px currentColor;">309.97</div>
<div class="t" style="right:1676.0px;top:743.1px;font-size:25px;line-height:25px;font-weight:400;color:#1a1a1a;font-weight:400;-webkit-text-stroke:0.55px currentColor;">301.65</div>
<div class="t" style="right:1516.0px;top:743.1px;font-size:25px;line-height:25px;font-weight:400;color:#1a1a1a;font-weight:400;-webkit-text-stroke:0.55px currentColor;">18.83</div>
<div class="t" style="right:1356.0px;top:743.1px;font-size:25px;line-height:25px;font-weight:400;color:#1a1a1a;font-weight:400;-webkit-text-stroke:0.55px currentColor;">0.61</div>
<div class="t" style="right:1196.0px;top:743.1px;font-size:25px;line-height:25px;font-weight:400;color:#1a1a1a;font-weight:400;-webkit-text-stroke:0.55px currentColor;">301.04</div>
<div class="t" style="right:1036.0px;top:743.1px;font-size:25px;line-height:25px;font-weight:400;color:#1a1a1a;font-weight:400;-webkit-text-stroke:0.55px currentColor;">290.00</div>
<div class="t" style="right:876.0px;top:743.1px;font-size:25px;line-height:25px;font-weight:400;color:#1a1a1a;font-weight:400;-webkit-text-stroke:0.55px currentColor;">18.10</div>
<div class="t" style="right:716.0px;top:743.1px;font-size:25px;line-height:25px;font-weight:400;color:#1a1a1a;font-weight:400;-webkit-text-stroke:0.55px currentColor;">0.60</div>
<div class="t" style="right:556.0px;top:743.1px;font-size:25px;line-height:25px;font-weight:400;color:#1a1a1a;font-weight:400;-webkit-text-stroke:0.55px currentColor;">289.40</div>
<div class="t" style="left:113.0px;top:795.0px;font-size:24.5px;line-height:24.5px;font-weight:400;color:#242424;letter-spacing:0.35px;">Berry Fusion</div>
<div class="t" style="right:2316.0px;top:795.4px;font-size:24px;line-height:24px;font-weight:400;color:#2b2b2b;">48.24</div>
<div class="t" style="right:2156.0px;top:795.4px;font-size:24px;line-height:24px;font-weight:400;color:#2b2b2b;">3.04</div>
<div class="t" style="right:1996.0px;top:795.4px;font-size:24px;line-height:24px;font-weight:400;color:#2b2b2b;">0.09</div>
<div class="t" style="right:1836.0px;top:795.4px;font-size:24px;line-height:24px;font-weight:400;color:#2b2b2b;">48.15</div>
<div class="t" style="right:1676.0px;top:795.4px;font-size:24px;line-height:24px;font-weight:400;color:#2b2b2b;">46.12</div>
<div class="t" style="right:1516.0px;top:795.4px;font-size:24px;line-height:24px;font-weight:400;color:#2b2b2b;">2.96</div>
<div class="t" style="right:1356.0px;top:795.4px;font-size:24px;line-height:24px;font-weight:400;color:#2b2b2b;">0.09</div>
<div class="t" style="right:1196.0px;top:795.4px;font-size:24px;line-height:24px;font-weight:400;color:#2b2b2b;">46.03</div>
<div class="t" style="right:1036.0px;top:795.4px;font-size:24px;line-height:24px;font-weight:400;color:#2b2b2b;">43.83</div>
<div class="t" style="right:876.0px;top:795.4px;font-size:24px;line-height:24px;font-weight:400;color:#2b2b2b;">2.78</div>
<div class="t" style="right:716.0px;top:795.4px;font-size:24px;line-height:24px;font-weight:400;color:#2b2b2b;">0.09</div>
<div class="t" style="right:556.0px;top:795.4px;font-size:24px;line-height:24px;font-weight:400;color:#2b2b2b;">43.74</div>
<div class="t" style="left:113.0px;top:846.7px;font-size:24.5px;line-height:24.5px;font-weight:400;color:#242424;letter-spacing:0.35px;">Citrus Burst</div>
<div class="t" style="right:2316.0px;top:847.1px;font-size:24px;line-height:24px;font-weight:400;color:#2b2b2b;">61.87</div>
<div class="t" style="right:2156.0px;top:847.1px;font-size:24px;line-height:24px;font-weight:400;color:#2b2b2b;">3.93</div>
<div class="t" style="right:1996.0px;top:847.1px;font-size:24px;line-height:24px;font-weight:400;color:#2b2b2b;">0.13</div>
<div class="t" style="right:1836.0px;top:847.1px;font-size:24px;line-height:24px;font-weight:400;color:#2b2b2b;">61.74</div>
<div class="t" style="right:1676.0px;top:847.1px;font-size:24px;line-height:24px;font-weight:400;color:#2b2b2b;">62.23</div>
<div class="t" style="right:1516.0px;top:847.1px;font-size:24px;line-height:24px;font-weight:400;color:#2b2b2b;">3.89</div>
<div class="t" style="right:1356.0px;top:847.1px;font-size:24px;line-height:24px;font-weight:400;color:#2b2b2b;">0.12</div>
<div class="t" style="right:1196.0px;top:847.1px;font-size:24px;line-height:24px;font-weight:400;color:#2b2b2b;">62.11</div>
<div class="t" style="right:1036.0px;top:847.1px;font-size:24px;line-height:24px;font-weight:400;color:#2b2b2b;">57.10</div>
<div class="t" style="right:876.0px;top:847.1px;font-size:24px;line-height:24px;font-weight:400;color:#2b2b2b;">3.62</div>
<div class="t" style="right:716.0px;top:847.1px;font-size:24px;line-height:24px;font-weight:400;color:#2b2b2b;">0.12</div>
<div class="t" style="right:556.0px;top:847.1px;font-size:24px;line-height:24px;font-weight:400;color:#2b2b2b;">56.98</div>
<div class="t" style="left:113.0px;top:898.8px;font-size:24.5px;line-height:24.5px;font-weight:400;color:#242424;letter-spacing:0.35px;">Original</div>
<div class="t" style="right:2316.0px;top:899.2px;font-size:24px;line-height:24px;font-weight:400;color:#2b2b2b;">200.49</div>
<div class="t" style="right:2156.0px;top:899.2px;font-size:24px;line-height:24px;font-weight:400;color:#2b2b2b;">12.67</div>
<div class="t" style="right:1996.0px;top:899.2px;font-size:24px;line-height:24px;font-weight:400;color:#2b2b2b;">0.41</div>
<div class="t" style="right:1836.0px;top:899.2px;font-size:24px;line-height:24px;font-weight:400;color:#2b2b2b;">200.08</div>
<div class="t" style="right:1676.0px;top:899.2px;font-size:24px;line-height:24px;font-weight:400;color:#2b2b2b;">193.30</div>
<div class="t" style="right:1516.0px;top:899.2px;font-size:24px;line-height:24px;font-weight:400;color:#2b2b2b;">11.99</div>
<div class="t" style="right:1356.0px;top:899.2px;font-size:24px;line-height:24px;font-weight:400;color:#2b2b2b;">0.40</div>
<div class="t" style="right:1196.0px;top:899.2px;font-size:24px;line-height:24px;font-weight:400;color:#2b2b2b;">192.90</div>
<div class="t" style="right:1036.0px;top:899.2px;font-size:24px;line-height:24px;font-weight:400;color:#2b2b2b;">189.07</div>
<div class="t" style="right:876.0px;top:899.2px;font-size:24px;line-height:24px;font-weight:400;color:#2b2b2b;">11.71</div>
<div class="t" style="right:716.0px;top:899.2px;font-size:24px;line-height:24px;font-weight:400;color:#2b2b2b;">0.39</div>
<div class="t" style="right:556.0px;top:899.2px;font-size:24px;line-height:24px;font-weight:400;color:#2b2b2b;">188.68</div>
<div class="t" style="left:82.2px;top:952.9px;font-size:25.5px;line-height:25.5px;font-weight:400;color:#1a1a1a;font-weight:400;-webkit-text-stroke:0.55px currentColor;letter-spacing:0.3px;">Artisan Ale</div>
<div class="t" style="right:2316.0px;top:953.4px;font-size:25px;line-height:25px;font-weight:400;color:#1a1a1a;font-weight:400;-webkit-text-stroke:0.55px currentColor;">1,463.87</div>
<div class="t" style="right:2156.0px;top:953.4px;font-size:25px;line-height:25px;font-weight:400;color:#1a1a1a;font-weight:400;-webkit-text-stroke:0.55px currentColor;">104.48</div>
<div class="t" style="right:1996.0px;top:953.4px;font-size:25px;line-height:25px;font-weight:400;color:#1a1a1a;font-weight:400;-webkit-text-stroke:0.55px currentColor;">3.35</div>
<div class="t" style="right:1836.0px;top:953.4px;font-size:25px;line-height:25px;font-weight:400;color:#1a1a1a;font-weight:400;-webkit-text-stroke:0.55px currentColor;">1,460.53</div>
<div class="t" style="right:1676.0px;top:953.4px;font-size:25px;line-height:25px;font-weight:400;color:#1a1a1a;font-weight:400;-webkit-text-stroke:0.55px currentColor;">1,482.98</div>
<div class="t" style="right:1516.0px;top:953.4px;font-size:25px;line-height:25px;font-weight:400;color:#1a1a1a;font-weight:400;-webkit-text-stroke:0.55px currentColor;">105.93</div>
<div class="t" style="right:1356.0px;top:953.4px;font-size:25px;line-height:25px;font-weight:400;color:#1a1a1a;font-weight:400;-webkit-text-stroke:0.55px currentColor;">3.36</div>
<div class="t" style="right:1196.0px;top:953.4px;font-size:25px;line-height:25px;font-weight:400;color:#1a1a1a;font-weight:400;-webkit-text-stroke:0.55px currentColor;">1,479.62</div>
<div class="t" style="right:1036.0px;top:953.4px;font-size:25px;line-height:25px;font-weight:400;color:#1a1a1a;font-weight:400;-webkit-text-stroke:0.55px currentColor;">1,480.96</div>
<div class="t" style="right:876.0px;top:953.4px;font-size:25px;line-height:25px;font-weight:400;color:#1a1a1a;font-weight:400;-webkit-text-stroke:0.55px currentColor;">106.56</div>
<div class="t" style="right:716.0px;top:953.4px;font-size:25px;line-height:25px;font-weight:400;color:#1a1a1a;font-weight:400;-webkit-text-stroke:0.55px currentColor;">3.38</div>
<div class="t" style="right:556.0px;top:953.4px;font-size:25px;line-height:25px;font-weight:400;color:#1a1a1a;font-weight:400;-webkit-text-stroke:0.55px currentColor;">1,477.58</div>
<div class="t" style="left:103.0px;top:1007.1px;font-size:25.5px;line-height:25.5px;font-weight:400;color:#1a1a1a;font-weight:400;-webkit-text-stroke:0.55px currentColor;letter-spacing:0.3px;">Beer</div>
<div class="t" style="right:2316.0px;top:1007.5px;font-size:25px;line-height:25px;font-weight:400;color:#1a1a1a;font-weight:400;-webkit-text-stroke:0.55px currentColor;">1,463.87</div>
<div class="t" style="right:2156.0px;top:1007.5px;font-size:25px;line-height:25px;font-weight:400;color:#1a1a1a;font-weight:400;-webkit-text-stroke:0.55px currentColor;">104.48</div>
<div class="t" style="right:1996.0px;top:1007.5px;font-size:25px;line-height:25px;font-weight:400;color:#1a1a1a;font-weight:400;-webkit-text-stroke:0.55px currentColor;">3.35</div>
<div class="t" style="right:1836.0px;top:1007.5px;font-size:25px;line-height:25px;font-weight:400;color:#1a1a1a;font-weight:400;-webkit-text-stroke:0.55px currentColor;">1,460.53</div>
<div class="t" style="right:1676.0px;top:1007.5px;font-size:25px;line-height:25px;font-weight:400;color:#1a1a1a;font-weight:400;-webkit-text-stroke:0.55px currentColor;">1,482.98</div>
<div class="t" style="right:1516.0px;top:1007.5px;font-size:25px;line-height:25px;font-weight:400;color:#1a1a1a;font-weight:400;-webkit-text-stroke:0.55px currentColor;">105.93</div>
<div class="t" style="right:1356.0px;top:1007.5px;font-size:25px;line-height:25px;font-weight:400;color:#1a1a1a;font-weight:400;-webkit-text-stroke:0.55px currentColor;">3.36</div>
<div class="t" style="right:1196.0px;top:1007.5px;font-size:25px;line-height:25px;font-weight:400;color:#1a1a1a;font-weight:400;-webkit-text-stroke:0.55px currentColor;">1,479.62</div>
<div class="t" style="right:1036.0px;top:1007.5px;font-size:25px;line-height:25px;font-weight:400;color:#1a1a1a;font-weight:400;-webkit-text-stroke:0.55px currentColor;">1,480.96</div>
<div class="t" style="right:876.0px;top:1007.5px;font-size:25px;line-height:25px;font-weight:400;color:#1a1a1a;font-weight:400;-webkit-text-stroke:0.55px currentColor;">106.56</div>
<div class="t" style="right:716.0px;top:1007.5px;font-size:25px;line-height:25px;font-weight:400;color:#1a1a1a;font-weight:400;-webkit-text-stroke:0.55px currentColor;">3.38</div>
<div class="t" style="right:556.0px;top:1007.5px;font-size:25px;line-height:25px;font-weight:400;color:#1a1a1a;font-weight:400;-webkit-text-stroke:0.55px currentColor;">1,477.58</div>
<div class="t" style="left:113.0px;top:1059.0px;font-size:24.5px;line-height:24.5px;font-weight:400;color:#242424;letter-spacing:0.35px;">Dark Roast</div>
<div class="t" style="right:2316.0px;top:1059.4px;font-size:24px;line-height:24px;font-weight:400;color:#2b2b2b;">45.24</div>
<div class="t" style="right:2156.0px;top:1059.4px;font-size:24px;line-height:24px;font-weight:400;color:#2b2b2b;">3.26</div>
<div class="t" style="right:1996.0px;top:1059.4px;font-size:24px;line-height:24px;font-weight:400;color:#2b2b2b;">0.10</div>
<div class="t" style="right:1836.0px;top:1059.4px;font-size:24px;line-height:24px;font-weight:400;color:#2b2b2b;">45.14</div>
<div class="t" style="right:1676.0px;top:1059.4px;font-size:24px;line-height:24px;font-weight:400;color:#2b2b2b;">41.13</div>
<div class="t" style="right:1516.0px;top:1059.4px;font-size:24px;line-height:24px;font-weight:400;color:#2b2b2b;">2.98</div>
<div class="t" style="right:1356.0px;top:1059.4px;font-size:24px;line-height:24px;font-weight:400;color:#2b2b2b;">0.09</div>
<div class="t" style="right:1196.0px;top:1059.4px;font-size:24px;line-height:24px;font-weight:400;color:#2b2b2b;">41.04</div>
<div class="t" style="right:1036.0px;top:1059.4px;font-size:24px;line-height:24px;font-weight:400;color:#2b2b2b;">37.85</div>
<div class="t" style="right:876.0px;top:1059.4px;font-size:24px;line-height:24px;font-weight:400;color:#2b2b2b;">2.76</div>
<div class="t" style="right:716.0px;top:1059.4px;font-size:24px;line-height:24px;font-weight:400;color:#2b2b2b;">0.09</div>
<div class="t" style="right:556.0px;top:1059.4px;font-size:24px;line-height:24px;font-weight:400;color:#2b2b2b;">37.76</div>
<div class="t" style="left:113.0px;top:1111.2px;font-size:24.5px;line-height:24.5px;font-weight:400;color:#242424;letter-spacing:0.35px;">Light</div>
<div class="t" style="right:2316.0px;top:1111.6px;font-size:24px;line-height:24px;font-weight:400;color:#2b2b2b;">106.99</div>
<div class="t" style="right:2156.0px;top:1111.6px;font-size:24px;line-height:24px;font-weight:400;color:#2b2b2b;">7.73</div>
<div class="t" style="right:1996.0px;top:1111.6px;font-size:24px;line-height:24px;font-weight:400;color:#2b2b2b;">0.24</div>
<div class="t" style="right:1836.0px;top:1111.6px;font-size:24px;line-height:24px;font-weight:400;color:#2b2b2b;">106.75</div>
<div class="t" style="right:1676.0px;top:1111.6px;font-size:24px;line-height:24px;font-weight:400;color:#2b2b2b;">109.31</div>
<div class="t" style="right:1516.0px;top:1111.6px;font-size:24px;line-height:24px;font-weight:400;color:#2b2b2b;">8.02</div>
<div class="t" style="right:1356.0px;top:1111.6px;font-size:24px;line-height:24px;font-weight:400;color:#2b2b2b;">0.25</div>
<div class="t" style="right:1196.0px;top:1111.6px;font-size:24px;line-height:24px;font-weight:400;color:#2b2b2b;">109.07</div>
<div class="t" style="right:1036.0px;top:1111.6px;font-size:24px;line-height:24px;font-weight:400;color:#2b2b2b;">105.99</div>
<div class="t" style="right:876.0px;top:1111.6px;font-size:24px;line-height:24px;font-weight:400;color:#2b2b2b;">7.52</div>
<div class="t" style="right:716.0px;top:1111.6px;font-size:24px;line-height:24px;font-weight:400;color:#2b2b2b;">0.24</div>
<div class="t" style="right:556.0px;top:1111.6px;font-size:24px;line-height:24px;font-weight:400;color:#2b2b2b;">105.74</div>
<div class="t" style="left:113.0px;top:1163.2px;font-size:24.5px;line-height:24.5px;font-weight:400;color:#242424;letter-spacing:0.35px;">Limited Edition ...</div>
<div class="t" style="right:2316.0px;top:1163.6px;font-size:24px;line-height:24px;font-weight:400;color:#2b2b2b;">14.81</div>
<div class="t" style="right:2156.0px;top:1163.6px;font-size:24px;line-height:24px;font-weight:400;color:#2b2b2b;">1.02</div>
<div class="t" style="right:1996.0px;top:1163.6px;font-size:24px;line-height:24px;font-weight:400;color:#2b2b2b;">0.03</div>
<div class="t" style="right:1836.0px;top:1163.6px;font-size:24px;line-height:24px;font-weight:400;color:#2b2b2b;">14.78</div>
<div class="t" style="right:1676.0px;top:1163.6px;font-size:24px;line-height:24px;font-weight:400;color:#2b2b2b;">16.31</div>
<div class="t" style="right:1516.0px;top:1163.6px;font-size:24px;line-height:24px;font-weight:400;color:#2b2b2b;">1.13</div>
<div class="t" style="right:1356.0px;top:1163.6px;font-size:24px;line-height:24px;font-weight:400;color:#2b2b2b;">0.04</div>
<div class="t" style="right:1196.0px;top:1163.6px;font-size:24px;line-height:24px;font-weight:400;color:#2b2b2b;">16.28</div>
<div class="t" style="right:1036.0px;top:1163.6px;font-size:24px;line-height:24px;font-weight:400;color:#2b2b2b;">15.92</div>
<div class="t" style="right:876.0px;top:1163.6px;font-size:24px;line-height:24px;font-weight:400;color:#2b2b2b;">1.14</div>
<div class="t" style="right:716.0px;top:1163.6px;font-size:24px;line-height:24px;font-weight:400;color:#2b2b2b;">0.03</div>
<div class="t" style="right:556.0px;top:1163.6px;font-size:24px;line-height:24px;font-weight:400;color:#2b2b2b;">15.89</div>
<div class="t" style="left:113.0px;top:1215.5px;font-size:24.5px;line-height:24.5px;font-weight:400;color:#242424;letter-spacing:0.35px;">Original</div>
<div class="t" style="right:2316.0px;top:1215.9px;font-size:24px;line-height:24px;font-weight:400;color:#2b2b2b;">1,158.75</div>
<div class="t" style="right:2156.0px;top:1215.9px;font-size:24px;line-height:24px;font-weight:400;color:#2b2b2b;">82.57</div>
<div class="t" style="right:1996.0px;top:1215.9px;font-size:24px;line-height:24px;font-weight:400;color:#2b2b2b;">2.65</div>
<div class="t" style="right:1836.0px;top:1215.9px;font-size:24px;line-height:24px;font-weight:400;color:#2b2b2b;">1,156.09</div>
<div class="t" style="right:1676.0px;top:1215.9px;font-size:24px;line-height:24px;font-weight:400;color:#2b2b2b;">1,179.31</div>
<div class="t" style="right:1516.0px;top:1215.9px;font-size:24px;line-height:24px;font-weight:400;color:#2b2b2b;">83.95</div>
<div class="t" style="right:1356.0px;top:1215.9px;font-size:24px;line-height:24px;font-weight:400;color:#2b2b2b;">2.66</div>
<div class="t" style="right:1196.0px;top:1215.9px;font-size:24px;line-height:24px;font-weight:400;color:#2b2b2b;">1,176.65</div>
<div class="t" style="right:1036.0px;top:1215.9px;font-size:24px;line-height:24px;font-weight:400;color:#2b2b2b;">1,171.33</div>
<div class="t" style="right:876.0px;top:1215.9px;font-size:24px;line-height:24px;font-weight:400;color:#2b2b2b;">84.38</div>
<div class="t" style="right:716.0px;top:1215.9px;font-size:24px;line-height:24px;font-weight:400;color:#2b2b2b;">2.67</div>
<div class="t" style="right:556.0px;top:1215.9px;font-size:24px;line-height:24px;font-weight:400;color:#2b2b2b;">1,168.66</div>
<div class="t" style="left:113.0px;top:1267.6px;font-size:24.5px;line-height:24.5px;font-weight:400;color:#242424;letter-spacing:0.35px;">Premium</div>
<div class="t" style="right:2316.0px;top:1268.0px;font-size:24px;line-height:24px;font-weight:400;color:#2b2b2b;">77.41</div>
<div class="t" style="right:2156.0px;top:1268.0px;font-size:24px;line-height:24px;font-weight:400;color:#2b2b2b;">5.54</div>
<div class="t" style="right:1996.0px;top:1268.0px;font-size:24px;line-height:24px;font-weight:400;color:#2b2b2b;">0.18</div>
<div class="t" style="right:1836.0px;top:1268.0px;font-size:24px;line-height:24px;font-weight:400;color:#2b2b2b;">77.24</div>
<div class="t" style="right:1676.0px;top:1268.0px;font-size:24px;line-height:24px;font-weight:400;color:#2b2b2b;">74.06</div>
<div class="t" style="right:1516.0px;top:1268.0px;font-size:24px;line-height:24px;font-weight:400;color:#2b2b2b;">5.31</div>
<div class="t" style="right:1356.0px;top:1268.0px;font-size:24px;line-height:24px;font-weight:400;color:#2b2b2b;">0.17</div>
<div class="t" style="right:1196.0px;top:1268.0px;font-size:24px;line-height:24px;font-weight:400;color:#2b2b2b;">73.89</div>
<div class="t" style="right:1036.0px;top:1268.0px;font-size:24px;line-height:24px;font-weight:400;color:#2b2b2b;">78.73</div>
<div class="t" style="right:876.0px;top:1268.0px;font-size:24px;line-height:24px;font-weight:400;color:#2b2b2b;">5.65</div>
<div class="t" style="right:716.0px;top:1268.0px;font-size:24px;line-height:24px;font-weight:400;color:#2b2b2b;">0.18</div>
<div class="t" style="right:556.0px;top:1268.0px;font-size:24px;line-height:24px;font-weight:400;color:#2b2b2b;">78.55</div>
<svg style="position:absolute;left:0;top:0" width="2785" height="1492" viewBox="0 0 2785 1492" fill="none"><rect x="53.8" y="628.0999999999999" width="15.5" height="15.5" stroke="#333" stroke-width="1.5" fill="none"/><line x1="57.5" y1="635.8" x2="65.6" y2="635.8" stroke="#333" stroke-width="1.5"/><rect x="53.8" y="692.3" width="15.5" height="15.5" stroke="#333" stroke-width="1.5" fill="none"/><line x1="57.5" y1="700.0" x2="65.6" y2="700.0" stroke="#333" stroke-width="1.5"/><rect x="73.8" y="746.1999999999999" width="15.5" height="15.5" stroke="#333" stroke-width="1.5" fill="none"/><line x1="77.5" y1="753.9" x2="85.6" y2="753.9" stroke="#333" stroke-width="1.5"/><rect x="53.8" y="956.4" width="15.5" height="15.5" stroke="#333" stroke-width="1.5" fill="none"/><line x1="57.5" y1="964.1" x2="65.6" y2="964.1" stroke="#333" stroke-width="1.5"/><rect x="73.8" y="1010.5999999999999" width="15.5" height="15.5" stroke="#333" stroke-width="1.5" fill="none"/><line x1="77.5" y1="1018.3" x2="85.6" y2="1018.3" stroke="#333" stroke-width="1.5"/></svg>
<div style="position:absolute;left:10.0px;top:1332.0px;width:2551.0px;height:55.0px;background:#f3f3f3;"></div>
<div style="position:absolute;left:10.0px;top:1331.5px;width:2551.0px;height:2.0px;background:#e0e0e0;"></div>
<div style="position:absolute;left:10.0px;top:1386.0px;width:2551.0px;height:2.0px;background:#e0e0e0;"></div>
<div class="t" style="left:30.6px;top:1349.5px;font-size:23px;line-height:23px;font-weight:400;color:#424242;">Rows: 122</div>
<div class="t" style="left:156.0px;top:1349.5px;font-size:23px;line-height:23px;font-weight:400;color:#424242;">Columns: 28</div>
<div class="t" style="left:310.4px;top:1349.5px;font-size:23px;line-height:23px;font-weight:400;color:#424242;">Sum: 3.72b</div>
<div class="t" style="left:451.4px;top:1349.5px;font-size:23px;line-height:23px;font-weight:400;color:#424242;">Avg: 77.55m</div>
<div class="t" style="left:604.0px;top:1349.5px;font-size:23px;line-height:23px;font-weight:400;color:#424242;">Count: 48</div>
<div style="position:absolute;left:795.0px;top:1337.7px;width:2.0px;height:43.0px;background:#dcdcdc;"></div>
<svg style="position:absolute;left:0;top:0" width="2785" height="1492" viewBox="0 0 2785 1492" fill="none"><path d="M730,1360.6 Q730.5,1355.5 733.5,1352.8 M736.5,1350.8 Q739,1349.8 742,1349.8 Q752.5,1350.5 752.8,1360.6" stroke="#333" stroke-width="1.5" fill="none" stroke-linecap="round"/><path d="M738,1356 Q736.5,1358 736.8,1360.5 Q737.5,1364.8 741.5,1365 Q743.5,1365 744.5,1364" stroke="#333" stroke-width="1.5" fill="none" stroke-linecap="round"/><path d="M742,1356.2 Q745.5,1357 745.8,1360.5" stroke="#333" stroke-width="1.5" fill="none" stroke-linecap="round"/><line x1="730.7" y1="1349.9" x2="749.9" y2="1368.7" stroke="#333" stroke-width="1.5" stroke-linecap="round"/><line x1="1497.5" y1="1362.4" x2="1517" y2="1362.4" stroke="#333" stroke-width="1.6"/><line x1="1549.6" y1="1362.7" x2="1749.5" y2="1362.7" stroke="#c8c8c8" stroke-width="4" stroke-linecap="round"/><line x1="1549.6" y1="1362.7" x2="1634" y2="1362.7" stroke="#2e7d6e" stroke-width="4" stroke-linecap="round"/><circle cx="1634.8" cy="1362.8" r="15.5" fill="#2e7d6e" stroke="#fff" stroke-width="3"/><path d="M1769.5,1362.6 L1790.5,1362.6 M1780,1352 L1780,1373.5" stroke="#333" stroke-width="1.6"/><line x1="1966.5" y1="1351.5" x2="1966.5" y2="1371.5" stroke="#9e9e9e" stroke-width="2"/><polyline points="1985,1352 1976,1361.5 1985,1371" stroke="#9e9e9e" stroke-width="2" fill="none"/><polyline points="2010.5,1352 2001,1361.5 2010.5,1371" stroke="#9e9e9e" stroke-width="2" fill="none"/><polyline points="2192,1352 2202,1361.5 2192,1371" stroke="#333" stroke-width="2.2" fill="none"/><polyline points="2217,1352 2227,1361.5 2217,1371" stroke="#333" stroke-width="2.2" fill="none"/><line x1="2234.5" y1="1351.5" x2="2234.5" y2="1372" stroke="#333" stroke-width="2.6"/><path d="M2527.30,1348.62 L2528.13,1344.38 A15,15 0 0 1 2534.87,1344.38 L2535.70,1348.62 A11.2,11.2 0 0 1 2538.40,1350.17 L2542.47,1348.77 A15,15 0 0 1 2545.84,1354.61 L2542.59,1357.44 A11.2,11.2 0 0 1 2542.59,1360.56 L2545.84,1363.39 A15,15 0 0 1 2542.47,1369.23 L2538.40,1367.83 A11.2,11.2 0 0 1 2535.70,1369.38 L2534.87,1373.62 A15,15 0 0 1 2528.13,1373.62 L2527.30,1369.38 A11.2,11.2 0 0 1 2524.60,1367.83 L2520.53,1369.23 A15,15 0 0 1 2517.16,1363.39 L2520.41,1360.56 A11.2,11.2 0 0 1 2520.41,1357.44 L2517.16,1354.61 A15,15 0 0 1 2520.53,1348.77 L2524.60,1350.17 A11.2,11.2 0 0 1 2527.30,1348.62 Z" stroke="#333" stroke-width="1.6" stroke-linejoin="round" fill="none"/><circle cx="2531.5" cy="1359" r="4" stroke="#117865" stroke-width="1.6"/></svg>
<div style="position:absolute;left:1820.7px;top:1340.8px;width:109.8px;height:38.3px;background:#fff;border:1.5px solid #d1d1d1;border-bottom:2px solid #555;border-radius:7px;box-sizing:border-box;"></div>
<div class="t" style="left:1877.0px;transform:translateX(-50%);top:1350.4px;font-size:22.5px;line-height:22.5px;font-weight:400;color:#242424;">100 %</div>
<div class="t" style="left:2022.4px;top:1349.7px;font-size:22.5px;line-height:22.5px;font-weight:400;color:#424242;">Page</div>
<div style="position:absolute;left:2081.7px;top:1339.4px;width:48.7px;height:38.6px;background:#f3f3f3;border:1.5px solid #d9d9d9;box-sizing:border-box;"></div>
<div class="t" style="left:2106.0px;transform:translateX(-50%);top:1349.7px;font-size:22.5px;line-height:22.5px;font-weight:400;color:#424242;">1</div>
<div class="t" style="left:2140.3px;top:1349.7px;font-size:22.5px;line-height:22.5px;font-weight:400;color:#424242;">of 9</div>
<div class="t" style="left:2319.6px;top:1349.7px;font-size:22.5px;line-height:22.5px;font-weight:400;color:#424242;">1&nbsp; to&nbsp; 15&nbsp; of&nbsp; 126</div>
<div style="position:absolute;left:10.0px;top:1388.0px;width:2760.0px;height:86.0px;background:#fff;border-bottom-left-radius:16px;border-bottom-right-radius:16px;"></div>
<div style="position:absolute;left:2150.0px;top:1390.4px;width:336.0px;height:62.9px;background:#ebebeb;border-radius:9px 0 0 9px;"></div>
<div class="t" style="left:91.4px;top:1411.4px;font-size:27.5px;line-height:27.5px;font-weight:400;color:#242424;">Planning 1</div>
<div class="t" style="left:445.6px;top:1411.4px;font-size:27.5px;line-height:27.5px;font-weight:400;color:#242424;">Planning 2</div>
<div class="t" style="left:799.8px;top:1411.4px;font-size:27.5px;line-height:27.5px;font-weight:400;color:#242424;">Planning 3</div>
<div class="t" style="left:1154.0px;top:1411.4px;font-size:27.5px;line-height:27.5px;font-weight:400;color:#242424;">Planning 4</div>
<div class="t" style="left:1508.2px;top:1411.4px;font-size:27.5px;line-height:27.5px;font-weight:400;color:#242424;">Planning 5</div>
<div class="t" style="left:1862.4px;top:1411.4px;font-size:27.5px;line-height:27.5px;font-weight:400;color:#242424;">Planning 6</div>
<div class="t" style="left:2216.6px;top:1411.4px;font-size:27.5px;line-height:27.5px;font-weight:400;color:#242424;">Planning 7</div>
<svg style="position:absolute;left:0;top:0" width="2785" height="1492" viewBox="0 0 2785 1492" fill="none"><path d="M67.82,1418.08 A12.6,12.6 0 1 1 62.12,1412.17" stroke="#3d3d3d" stroke-width="3.5" fill="none"/><path d="M61.76,1421.76 A5.6,5.6 0 1 1 57.75,1417.97" stroke="#3d3d3d" stroke-width="3.3" fill="none"/><line x1="57.199999999999996" y1="1422.8000000000002" x2="68.4" y2="1411.6000000000001" stroke="#3d3d3d" stroke-width="1.8" stroke-linecap="round"/><path d="M66.0,1414.0 L68.7,1406.8000000000002 L70.2,1409.6000000000001 L74.0,1410.6000000000001 L67.0,1413.0 Z" fill="#3d3d3d" stroke="#3d3d3d" stroke-width="0.8" stroke-linejoin="round"/><path d="M422.02,1418.08 A12.6,12.6 0 1 1 416.32,1412.17" stroke="#3d3d3d" stroke-width="3.5" fill="none"/><path d="M415.96,1421.76 A5.6,5.6 0 1 1 411.95,1417.97" stroke="#3d3d3d" stroke-width="3.3" fill="none"/><line x1="411.4" y1="1422.8000000000002" x2="422.59999999999997" y2="1411.6000000000001" stroke="#3d3d3d" stroke-width="1.8" stroke-linecap="round"/><path d="M420.2,1414.0 L422.9,1406.8000000000002 L424.4,1409.6000000000001 L428.2,1410.6000000000001 L421.2,1413.0 Z" fill="#3d3d3d" stroke="#3d3d3d" stroke-width="0.8" stroke-linejoin="round"/><path d="M776.22,1418.08 A12.6,12.6 0 1 1 770.52,1412.17" stroke="#3d3d3d" stroke-width="3.5" fill="none"/><path d="M770.16,1421.76 A5.6,5.6 0 1 1 766.15,1417.97" stroke="#3d3d3d" stroke-width="3.3" fill="none"/><line x1="765.5999999999999" y1="1422.8000000000002" x2="776.8" y2="1411.6000000000001" stroke="#3d3d3d" stroke-width="1.8" stroke-linecap="round"/><path d="M774.4,1414.0 L777.0999999999999,1406.8000000000002 L778.5999999999999,1409.6000000000001 L782.4,1410.6000000000001 L775.4,1413.0 Z" fill="#3d3d3d" stroke="#3d3d3d" stroke-width="0.8" stroke-linejoin="round"/><path d="M1130.42,1418.08 A12.6,12.6 0 1 1 1124.72,1412.17" stroke="#3d3d3d" stroke-width="3.5" fill="none"/><path d="M1124.36,1421.76 A5.6,5.6 0 1 1 1120.35,1417.97" stroke="#3d3d3d" stroke-width="3.3" fill="none"/><line x1="1119.8" y1="1422.8000000000002" x2="1131.0" y2="1411.6000000000001" stroke="#3d3d3d" stroke-width="1.8" stroke-linecap="round"/><path d="M1128.6,1414.0 L1131.3,1406.8000000000002 L1132.8,1409.6000000000001 L1136.6,1410.6000000000001 L1129.6,1413.0 Z" fill="#3d3d3d" stroke="#3d3d3d" stroke-width="0.8" stroke-linejoin="round"/><path d="M1484.62,1418.08 A12.6,12.6 0 1 1 1478.92,1412.17" stroke="#3d3d3d" stroke-width="3.5" fill="none"/><path d="M1478.56,1421.76 A5.6,5.6 0 1 1 1474.55,1417.97" stroke="#3d3d3d" stroke-width="3.3" fill="none"/><line x1="1474.0" y1="1422.8000000000002" x2="1485.2" y2="1411.6000000000001" stroke="#3d3d3d" stroke-width="1.8" stroke-linecap="round"/><path d="M1482.8,1414.0 L1485.5,1406.8000000000002 L1487.0,1409.6000000000001 L1490.8,1410.6000000000001 L1483.8,1413.0 Z" fill="#3d3d3d" stroke="#3d3d3d" stroke-width="0.8" stroke-linejoin="round"/><path d="M1838.82,1418.08 A12.6,12.6 0 1 1 1833.12,1412.17" stroke="#3d3d3d" stroke-width="3.5" fill="none"/><path d="M1832.76,1421.76 A5.6,5.6 0 1 1 1828.75,1417.97" stroke="#3d3d3d" stroke-width="3.3" fill="none"/><line x1="1828.2" y1="1422.8000000000002" x2="1839.4" y2="1411.6000000000001" stroke="#3d3d3d" stroke-width="1.8" stroke-linecap="round"/><path d="M1837.0,1414.0 L1839.7,1406.8000000000002 L1841.2,1409.6000000000001 L1845.0,1410.6000000000001 L1838.0,1413.0 Z" fill="#3d3d3d" stroke="#3d3d3d" stroke-width="0.8" stroke-linejoin="round"/><path d="M2193.02,1418.08 A12.6,12.6 0 1 1 2187.32,1412.17" stroke="#3d3d3d" stroke-width="3.5" fill="none"/><path d="M2186.96,1421.76 A5.6,5.6 0 1 1 2182.95,1417.97" stroke="#3d3d3d" stroke-width="3.3" fill="none"/><line x1="2182.4" y1="1422.8000000000002" x2="2193.6" y2="1411.6000000000001" stroke="#3d3d3d" stroke-width="1.8" stroke-linecap="round"/><path d="M2191.2,1414.0 L2193.9,1406.8000000000002 L2195.4,1409.6000000000001 L2199.2,1410.6000000000001 L2192.2,1413.0 Z" fill="#3d3d3d" stroke="#3d3d3d" stroke-width="0.8" stroke-linejoin="round"/><line x1="378.8" y1="1402" x2="378.8" y2="1442" stroke="#d6d6d6" stroke-width="2"/><line x1="733.0" y1="1402" x2="733.0" y2="1442" stroke="#d6d6d6" stroke-width="2"/><line x1="1087.2" y1="1402" x2="1087.2" y2="1442" stroke="#d6d6d6" stroke-width="2"/><line x1="1441.3999999999999" y1="1402" x2="1441.3999999999999" y2="1442" stroke="#d6d6d6" stroke-width="2"/><line x1="1795.6" y1="1402" x2="1795.6" y2="1442" stroke="#d6d6d6" stroke-width="2"/><line x1="2149.8" y1="1402" x2="2149.8" y2="1442" stroke="#d6d6d6" stroke-width="2"/><path d="M2459,1418.5 L2477.5,1418.5 L2468.2,1428 Z" fill="#333"/><path d="M2502,1431.8 L2533.5,1431.8 M2517.8,1416.3 L2517.8,1447.2" stroke="#222" stroke-width="1.8"/><path d="M2581.95,1421.79 L2582.74,1417.67 A14.5,14.5 0 0 1 2589.26,1417.67 L2590.05,1421.79 A10.8,10.8 0 0 1 2592.65,1423.29 L2596.60,1421.91 A14.5,14.5 0 0 1 2599.87,1427.56 L2596.69,1430.30 A10.8,10.8 0 0 1 2596.69,1433.30 L2599.87,1436.04 A14.5,14.5 0 0 1 2596.60,1441.69 L2592.65,1440.31 A10.8,10.8 0 0 1 2590.05,1441.81 L2589.26,1445.93 A14.5,14.5 0 0 1 2582.74,1445.93 L2581.95,1441.81 A10.8,10.8 0 0 1 2579.35,1440.31 L2575.40,1441.69 A14.5,14.5 0 0 1 2572.13,1436.04 L2575.31,1433.30 A10.8,10.8 0 0 1 2575.31,1430.30 L2572.13,1427.56 A14.5,14.5 0 0 1 2575.40,1421.91 L2579.35,1423.29 A10.8,10.8 0 0 1 2581.95,1421.79 Z" stroke="#222" stroke-width="1.6" stroke-linejoin="round" fill="none"/><circle cx="2586" cy="1431.8" r="3.8" stroke="#222" stroke-width="1.6"/><path d="M2651,1445.4 L2645,1445.4 Q2641,1445.4 2641,1441.4 L2641,1418.3 Q2641,1414.3 2645,1414.3 L2659.6,1414.3 Q2663.6,1414.3 2663.6,1418.3 L2663.6,1428" stroke="#2b2b2b" stroke-width="1.6" fill="none"/><line x1="2646.2" y1="1422.9" x2="2657.6" y2="1422.9" stroke="#2b2b2b" stroke-width="1.6"/><line x1="2646.2" y1="1431" x2="2652.5" y2="1431" stroke="#2b2b2b" stroke-width="1.6"/><circle cx="2661" cy="1438.8" r="9" fill="#117865"/><path d="M2661,1434 L2661,1443.6 M2656.2,1438.8 L2665.8,1438.8" stroke="#fff" stroke-width="1.8"/><rect x="2723" y="1424.5" width="22.6" height="22.8" rx="5" stroke="#111" stroke-width="1.7"/><path d="M2714.3,1440 L2714.3,1431 Q2714.3,1416 2729,1416 L2735,1416" stroke="#111" stroke-width="1.6" fill="none"/><path d="M2718.6,1443.5 L2718.6,1433 Q2718.6,1420.2 2731,1420.2 L2737,1420.2" stroke="#111" stroke-width="1.6" fill="none"/><line x1="41" y1="1466" x2="2431" y2="1466" stroke="#c1c1c1" stroke-width="11.5" stroke-linecap="round"/><path d="M25.5,1461.5 L17.5,1466 L25.5,1470.5 Z" fill="#9e9e9e"/><path d="M2470,1461.5 L2478,1466 L2470,1470.5 Z" fill="#9e9e9e"/><rect x="2545.2" y="1195" width="14.5" height="106.5" rx="7.2" fill="#f6f6f6"/><rect x="2545.2" y="600" width="14.5" height="609.5" rx="7.2" fill="#acacac"/></svg>
<div class="t" style="left:2611.2px;top:84.0px;font-size:32px;line-height:32px;color:#1a1a1a;transform-origin:0 0;transform:rotate(90deg) scaleX(0.975);font-weight:400;-webkit-text-stroke:1.3px #1a1a1a;">Filters</div>
<div class="t" style="left:2680.6px;top:84.0px;font-size:32px;line-height:32px;color:#1a1a1a;transform-origin:0 0;transform:rotate(90deg) scaleX(0.94);font-weight:400;-webkit-text-stroke:1.3px #1a1a1a;">Fields</div>
<div class="t" style="left:2749.8px;top:132.2px;font-size:32px;line-height:32px;color:#1a1a1a;transform-origin:0 0;transform:rotate(90deg) scaleX(0.95);font-weight:400;-webkit-text-stroke:1.3px #1a1a1a;">Data</div>
<svg style="position:absolute;left:0;top:0" width="2785" height="1492" viewBox="0 0 2785 1492" fill="none"><path d="M2724,91.5 A11.9,11.9 0 0 1 2746.5,85" stroke="#1a1a1a" stroke-width="2.5" fill="none" stroke-linecap="round"/><path d="M2748,78.5 L2748,86 L2740.5,86" stroke="#1a1a1a" stroke-width="2.5" fill="none" stroke-linecap="round" stroke-linejoin="round"/><path d="M2747.8,90.5 A11.9,11.9 0 0 1 2725.2,96.8" stroke="#1a1a1a" stroke-width="2.5" fill="none" stroke-linecap="round"/><path d="M2724,103.3 L2724,95.8 L2731.3,95.8" stroke="#1a1a1a" stroke-width="2.5" fill="none" stroke-linecap="round" stroke-linejoin="round"/></svg>
</div></body></html>
